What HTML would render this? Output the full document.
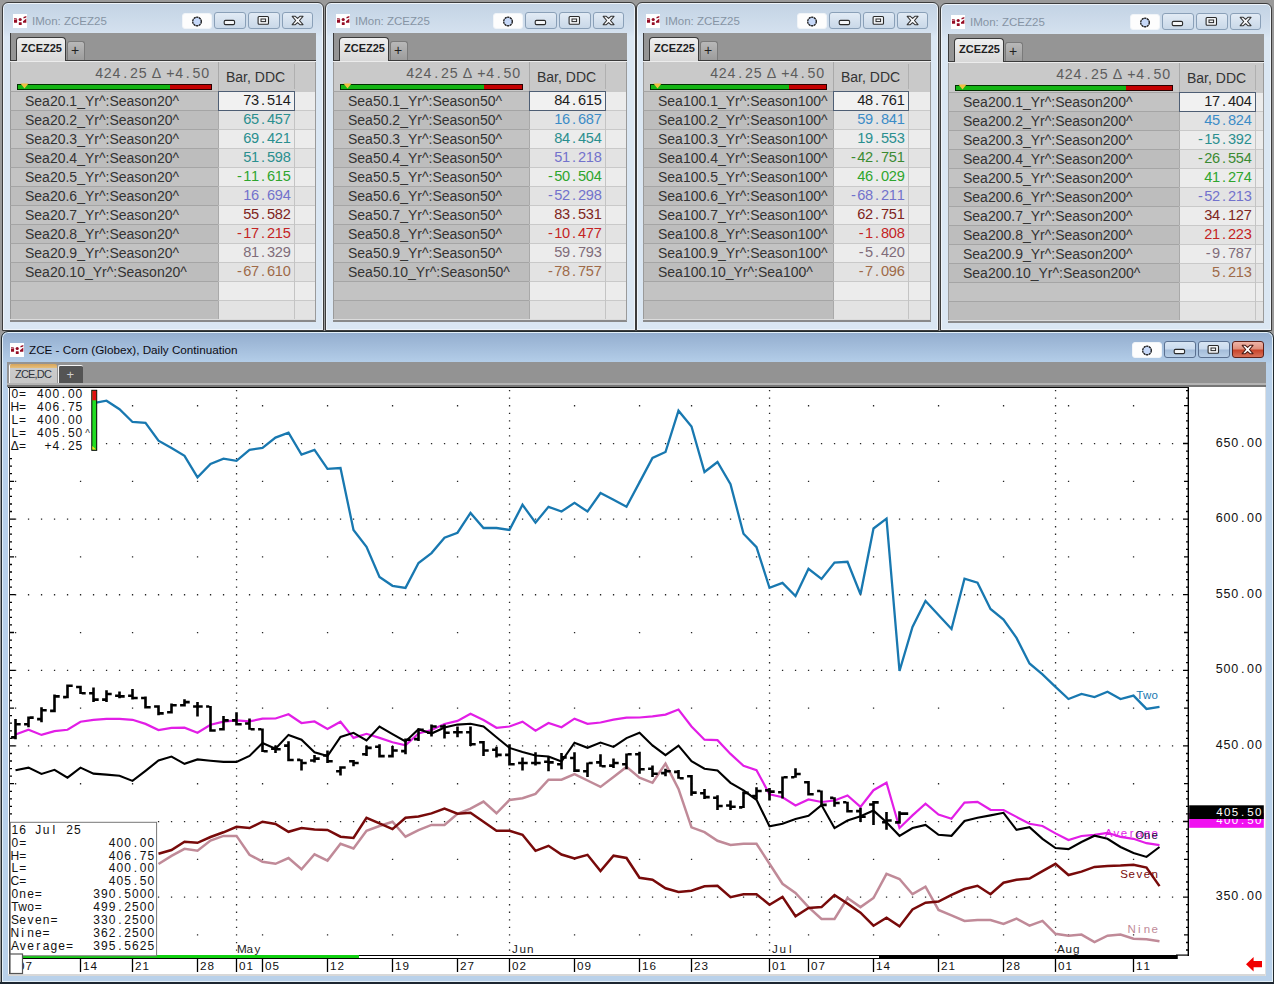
<!DOCTYPE html><html><head><meta charset="utf-8"><style>
*{margin:0;padding:0;box-sizing:border-box}
html,body{width:1274px;height:984px;overflow:hidden;background:#9a9a9a;font-family:"Liberation Sans",sans-serif;position:relative}
.abs{position:absolute}
.win{position:absolute;border:1px solid #3c3c3c;border-radius:6px 6px 0 0;background:linear-gradient(#c3d3e4 0px,#d3e0ee 28px,#dbe7f3 34px,#dbe7f3 100%);box-shadow:inset 0 0 0 1px #eef4fa}
.ttl{position:absolute;font-size:11.5px;line-height:14px;color:#8694a4;white-space:nowrap;letter-spacing:0}
.ico{position:absolute;width:15px;height:15px;background:#fff}
.ico i{position:absolute;background:#a5132d}
.btn{position:absolute;height:17px;border:1px solid #8aa0b8;border-radius:3px;background:linear-gradient(#e2ebf5,#c9d8e8)}
.btn.pin{background:#fdfdfd;border-color:#f0f4f8}
.tabs{position:absolute;background:#959595;border-left:1px solid #3a3a3a}
.tab{position:absolute;border:1px solid #3a3a3a;border-bottom:none;border-radius:4px 4px 0 0;background:linear-gradient(#f0f0f0,#d8d8d8);font-weight:bold;font-size:11px;line-height:12px;color:#1e1e1e}
.ptab{position:absolute;border:1px solid #7a7a7a;border-bottom:none;border-radius:3px 3px 0 0;background:linear-gradient(#b8b8b8,#9c9c9c);font-size:14px;color:#222;text-align:center}
.grid{position:absolute;background:#c3c3c3}
.row{position:absolute;left:0;height:19px;border-top:1px solid #a9a9a9}
.nm{position:absolute;font-size:14px;line-height:16px;color:#333;white-space:nowrap}
.val{position:absolute;font-size:14px;line-height:16px;text-align:right;white-space:nowrap;letter-spacing:1px}
</style></head><body>
<div class="win" style="left:2px;top:2px;width:322px;height:329px"></div><svg class="abs" style="left:13px;top:14px" width="15" height="15"><rect x="0" y="0" width="14" height="14" fill="#fff"/><g fill="#960c24"><path d="M1 4.2H3.3L4.1 5V8.7H1Z"/><path d="M1 4.9H3.6V5.5H1Z" fill="#fff"/><circle cx="7.2" cy="5.5" r="1.6"/><rect x="5.8" y="8.2" width="2.9" height="2.8" rx="0.6"/><path d="M10.5 3L13.3 2.1V3.6L10.5 4.6Z"/><path d="M10 7.3L13.3 4.6V8.7H10Z"/></g></svg><div class="ttl" style="left:32px;top:14px">IMon: ZCEZ25</div><div class="btn pin" style="left:182px;top:13px;width:30px;height:16px"><svg class="abs" style="left:-1px;top:-1px" width="30" height="17"><circle cx="15" cy="8.5" r="4.3" fill="#c6d8f8" stroke="#111" stroke-width="1.3" stroke-dasharray="2.2 0.5"/></svg></div><div class="btn" style="left:214px;top:12px;width:31.5px;height:17.2px"><svg class="abs" style="left:-1px;top:-1px" width="32" height="18"><rect x="10.2" y="8.4" width="10.4" height="4.2" rx="1.3" fill="#f4f6f8" stroke="#2a2a2a" stroke-width="1.1"/></svg></div><div class="btn" style="left:248.4px;top:12px;width:31.2px;height:17.2px"><svg class="abs" style="left:-1px;top:-1px" width="32" height="18"><rect x="10.1" y="4.5" width="10.4" height="7.8" rx="1" fill="#f4f6f8" stroke="#2a2a2a" stroke-width="1.1"/><rect x="13" y="7" width="4.6" height="2.6" fill="none" stroke="#2a2a2a" stroke-width="1"/></svg></div><div class="btn" style="left:282px;top:12px;width:31.3px;height:17.2px"><svg class="abs" style="left:-1px;top:-1px" width="32" height="18"><path d="M10.2 4.3 L13.3 4.3 L15.6 6.4 L17.9 4.3 L21 4.3 L17.5 8.5 L21 12.7 L17.9 12.7 L15.6 10.6 L13.3 12.7 L10.2 12.7 L13.7 8.5 Z" fill="#f8f9fb" stroke="#333" stroke-width="1.1" stroke-linejoin="round"/></svg></div><div class="tabs" style="left:10px;top:33px;width:306px;height:28px"></div><div class="abs" style="left:10px;top:60px;width:306px;height:1px;background:#3a3a3a"></div><div class="abs" style="left:10px;top:61px;width:306px;height:1px;background:#ececec"></div><div class="tab" style="left:16px;top:37px;width:50px;height:24px"><span class="abs" style="left:4px;top:4px">ZCEZ25</span></div><div class="ptab" style="left:67px;top:41px;width:18px;height:19px"><span class="abs" style="left:3px;top:0px">+</span></div><div class="abs" style="left:10px;top:62px;width:306px;height:29px;background:#c9c9c9;border-left:1px solid #9a9a9a"></div><div class="abs" style="left:218px;top:62px;width:1px;height:29px;background:#a9a9a9"></div><div class="abs" style="left:294px;top:64px;width:1px;height:25px;background:#b0b0b0"></div><div class="abs" style="left:226px;top:69px;font-size:14px;line-height:16px;color:#333;white-space:nowrap">Bar, DDC</div><div class="abs" style="left:17px;top:84px;width:195px;height:6px;background:#c40000;border:1px solid #2a0000"></div><div class="abs" style="left:17px;top:84px;width:153px;height:6px;background:#14b514;border:1px solid #003000;border-right:none"></div><svg class="abs" style="left:20px;top:83px" width="9" height="6"><path d="M0.5 0.5 L8.5 0.5 L4.5 5.5Z" fill="#f0c040"/></svg><div class="abs" style="left:10px;top:91px;width:208px;height:19px;background:#c3c3c3;border-top:1px solid #a5a5a5;border-left:1px solid #9a9a9a"></div><div class="abs" style="left:218px;top:91px;width:98px;height:19px;background:#ececec;border-top:1px solid #c9c9c9;border-left:1px solid #a9a9a9"></div><div class="abs" style="left:294px;top:91px;width:1px;height:19px;background:#c4c4c4"></div><div class="nm" style="left:25px;top:93px">Sea20.1_Yr^:Season20^</div><div class="abs" style="left:10px;top:110px;width:208px;height:19px;background:#bdbdbd;border-top:1px solid #a5a5a5;border-left:1px solid #9a9a9a"></div><div class="abs" style="left:218px;top:110px;width:98px;height:19px;background:#e3e3e3;border-top:1px solid #c9c9c9;border-left:1px solid #a9a9a9"></div><div class="abs" style="left:294px;top:110px;width:1px;height:19px;background:#c4c4c4"></div><div class="nm" style="left:25px;top:112px">Sea20.2_Yr^:Season20^</div><div class="abs" style="left:10px;top:129px;width:208px;height:19px;background:#c3c3c3;border-top:1px solid #a5a5a5;border-left:1px solid #9a9a9a"></div><div class="abs" style="left:218px;top:129px;width:98px;height:19px;background:#ececec;border-top:1px solid #c9c9c9;border-left:1px solid #a9a9a9"></div><div class="abs" style="left:294px;top:129px;width:1px;height:19px;background:#c4c4c4"></div><div class="nm" style="left:25px;top:131px">Sea20.3_Yr^:Season20^</div><div class="abs" style="left:10px;top:148px;width:208px;height:19px;background:#bdbdbd;border-top:1px solid #a5a5a5;border-left:1px solid #9a9a9a"></div><div class="abs" style="left:218px;top:148px;width:98px;height:19px;background:#e3e3e3;border-top:1px solid #c9c9c9;border-left:1px solid #a9a9a9"></div><div class="abs" style="left:294px;top:148px;width:1px;height:19px;background:#c4c4c4"></div><div class="nm" style="left:25px;top:150px">Sea20.4_Yr^:Season20^</div><div class="abs" style="left:10px;top:167px;width:208px;height:19px;background:#c3c3c3;border-top:1px solid #a5a5a5;border-left:1px solid #9a9a9a"></div><div class="abs" style="left:218px;top:167px;width:98px;height:19px;background:#ececec;border-top:1px solid #c9c9c9;border-left:1px solid #a9a9a9"></div><div class="abs" style="left:294px;top:167px;width:1px;height:19px;background:#c4c4c4"></div><div class="nm" style="left:25px;top:169px">Sea20.5_Yr^:Season20^</div><div class="abs" style="left:10px;top:186px;width:208px;height:19px;background:#bdbdbd;border-top:1px solid #a5a5a5;border-left:1px solid #9a9a9a"></div><div class="abs" style="left:218px;top:186px;width:98px;height:19px;background:#e3e3e3;border-top:1px solid #c9c9c9;border-left:1px solid #a9a9a9"></div><div class="abs" style="left:294px;top:186px;width:1px;height:19px;background:#c4c4c4"></div><div class="nm" style="left:25px;top:188px">Sea20.6_Yr^:Season20^</div><div class="abs" style="left:10px;top:205px;width:208px;height:19px;background:#c3c3c3;border-top:1px solid #a5a5a5;border-left:1px solid #9a9a9a"></div><div class="abs" style="left:218px;top:205px;width:98px;height:19px;background:#ececec;border-top:1px solid #c9c9c9;border-left:1px solid #a9a9a9"></div><div class="abs" style="left:294px;top:205px;width:1px;height:19px;background:#c4c4c4"></div><div class="nm" style="left:25px;top:207px">Sea20.7_Yr^:Season20^</div><div class="abs" style="left:10px;top:224px;width:208px;height:19px;background:#bdbdbd;border-top:1px solid #a5a5a5;border-left:1px solid #9a9a9a"></div><div class="abs" style="left:218px;top:224px;width:98px;height:19px;background:#e3e3e3;border-top:1px solid #c9c9c9;border-left:1px solid #a9a9a9"></div><div class="abs" style="left:294px;top:224px;width:1px;height:19px;background:#c4c4c4"></div><div class="nm" style="left:25px;top:226px">Sea20.8_Yr^:Season20^</div><div class="abs" style="left:10px;top:243px;width:208px;height:19px;background:#c3c3c3;border-top:1px solid #a5a5a5;border-left:1px solid #9a9a9a"></div><div class="abs" style="left:218px;top:243px;width:98px;height:19px;background:#ececec;border-top:1px solid #c9c9c9;border-left:1px solid #a9a9a9"></div><div class="abs" style="left:294px;top:243px;width:1px;height:19px;background:#c4c4c4"></div><div class="nm" style="left:25px;top:245px">Sea20.9_Yr^:Season20^</div><div class="abs" style="left:10px;top:262px;width:208px;height:19px;background:#bdbdbd;border-top:1px solid #a5a5a5;border-left:1px solid #9a9a9a"></div><div class="abs" style="left:218px;top:262px;width:98px;height:19px;background:#e3e3e3;border-top:1px solid #c9c9c9;border-left:1px solid #a9a9a9"></div><div class="abs" style="left:294px;top:262px;width:1px;height:19px;background:#c4c4c4"></div><div class="nm" style="left:25px;top:264px">Sea20.10_Yr^:Season20^</div><div class="abs" style="left:10px;top:281px;width:208px;height:19px;background:#c3c3c3;border-top:1px solid #a5a5a5;border-left:1px solid #9a9a9a"></div><div class="abs" style="left:218px;top:281px;width:98px;height:19px;background:#ececec;border-top:1px solid #c9c9c9;border-left:1px solid #a9a9a9"></div><div class="abs" style="left:294px;top:281px;width:1px;height:19px;background:#c4c4c4"></div><div class="abs" style="left:10px;top:300px;width:208px;height:19px;background:#bdbdbd;border-top:1px solid #a5a5a5;border-left:1px solid #9a9a9a"></div><div class="abs" style="left:218px;top:300px;width:98px;height:19px;background:#e3e3e3;border-top:1px solid #c9c9c9;border-left:1px solid #a9a9a9"></div><div class="abs" style="left:294px;top:300px;width:1px;height:19px;background:#c4c4c4"></div><div class="abs" style="left:218px;top:91px;width:77px;height:20px;border:1px solid #4e5e74;background:rgba(255,255,255,0.25)"></div><div class="abs" style="left:10px;top:319px;width:306px;height:1px;background:#dcdcdc"></div><div class="abs" style="left:10px;top:320px;width:306px;height:1.5px;background:#8a8a8a"></div><div class="abs" style="left:315px;top:62px;width:1px;height:259px;background:#9a9a9a"></div>
<div class="win" style="left:325px;top:2px;width:311px;height:329px"></div><svg class="abs" style="left:336px;top:14px" width="15" height="15"><rect x="0" y="0" width="14" height="14" fill="#fff"/><g fill="#960c24"><path d="M1 4.2H3.3L4.1 5V8.7H1Z"/><path d="M1 4.9H3.6V5.5H1Z" fill="#fff"/><circle cx="7.2" cy="5.5" r="1.6"/><rect x="5.8" y="8.2" width="2.9" height="2.8" rx="0.6"/><path d="M10.5 3L13.3 2.1V3.6L10.5 4.6Z"/><path d="M10 7.3L13.3 4.6V8.7H10Z"/></g></svg><div class="ttl" style="left:355px;top:14px">IMon: ZCEZ25</div><div class="btn pin" style="left:493px;top:13px;width:30px;height:16px"><svg class="abs" style="left:-1px;top:-1px" width="30" height="17"><circle cx="15" cy="8.5" r="4.3" fill="#c6d8f8" stroke="#111" stroke-width="1.3" stroke-dasharray="2.2 0.5"/></svg></div><div class="btn" style="left:525px;top:12px;width:31.5px;height:17.2px"><svg class="abs" style="left:-1px;top:-1px" width="32" height="18"><rect x="10.2" y="8.4" width="10.4" height="4.2" rx="1.3" fill="#f4f6f8" stroke="#2a2a2a" stroke-width="1.1"/></svg></div><div class="btn" style="left:559.4px;top:12px;width:31.2px;height:17.2px"><svg class="abs" style="left:-1px;top:-1px" width="32" height="18"><rect x="10.1" y="4.5" width="10.4" height="7.8" rx="1" fill="#f4f6f8" stroke="#2a2a2a" stroke-width="1.1"/><rect x="13" y="7" width="4.6" height="2.6" fill="none" stroke="#2a2a2a" stroke-width="1"/></svg></div><div class="btn" style="left:593px;top:12px;width:31.3px;height:17.2px"><svg class="abs" style="left:-1px;top:-1px" width="32" height="18"><path d="M10.2 4.3 L13.3 4.3 L15.6 6.4 L17.9 4.3 L21 4.3 L17.5 8.5 L21 12.7 L17.9 12.7 L15.6 10.6 L13.3 12.7 L10.2 12.7 L13.7 8.5 Z" fill="#f8f9fb" stroke="#333" stroke-width="1.1" stroke-linejoin="round"/></svg></div><div class="tabs" style="left:333px;top:33px;width:294px;height:28px"></div><div class="abs" style="left:333px;top:60px;width:294px;height:1px;background:#3a3a3a"></div><div class="abs" style="left:333px;top:61px;width:294px;height:1px;background:#ececec"></div><div class="tab" style="left:339px;top:37px;width:50px;height:24px"><span class="abs" style="left:4px;top:4px">ZCEZ25</span></div><div class="ptab" style="left:390px;top:41px;width:18px;height:19px"><span class="abs" style="left:3px;top:0px">+</span></div><div class="abs" style="left:333px;top:62px;width:294px;height:29px;background:#c9c9c9;border-left:1px solid #9a9a9a"></div><div class="abs" style="left:529px;top:62px;width:1px;height:29px;background:#a9a9a9"></div><div class="abs" style="left:605px;top:64px;width:1px;height:25px;background:#b0b0b0"></div><div class="abs" style="left:537px;top:69px;font-size:14px;line-height:16px;color:#333;white-space:nowrap">Bar, DDC</div><div class="abs" style="left:340px;top:84px;width:183px;height:6px;background:#c40000;border:1px solid #2a0000"></div><div class="abs" style="left:340px;top:84px;width:144px;height:6px;background:#14b514;border:1px solid #003000;border-right:none"></div><svg class="abs" style="left:343px;top:83px" width="9" height="6"><path d="M0.5 0.5 L8.5 0.5 L4.5 5.5Z" fill="#f0c040"/></svg><div class="abs" style="left:333px;top:91px;width:196px;height:19px;background:#c3c3c3;border-top:1px solid #a5a5a5;border-left:1px solid #9a9a9a"></div><div class="abs" style="left:529px;top:91px;width:98px;height:19px;background:#ececec;border-top:1px solid #c9c9c9;border-left:1px solid #a9a9a9"></div><div class="abs" style="left:605px;top:91px;width:1px;height:19px;background:#c4c4c4"></div><div class="nm" style="left:348px;top:93px">Sea50.1_Yr^:Season50^</div><div class="abs" style="left:333px;top:110px;width:196px;height:19px;background:#bdbdbd;border-top:1px solid #a5a5a5;border-left:1px solid #9a9a9a"></div><div class="abs" style="left:529px;top:110px;width:98px;height:19px;background:#e3e3e3;border-top:1px solid #c9c9c9;border-left:1px solid #a9a9a9"></div><div class="abs" style="left:605px;top:110px;width:1px;height:19px;background:#c4c4c4"></div><div class="nm" style="left:348px;top:112px">Sea50.2_Yr^:Season50^</div><div class="abs" style="left:333px;top:129px;width:196px;height:19px;background:#c3c3c3;border-top:1px solid #a5a5a5;border-left:1px solid #9a9a9a"></div><div class="abs" style="left:529px;top:129px;width:98px;height:19px;background:#ececec;border-top:1px solid #c9c9c9;border-left:1px solid #a9a9a9"></div><div class="abs" style="left:605px;top:129px;width:1px;height:19px;background:#c4c4c4"></div><div class="nm" style="left:348px;top:131px">Sea50.3_Yr^:Season50^</div><div class="abs" style="left:333px;top:148px;width:196px;height:19px;background:#bdbdbd;border-top:1px solid #a5a5a5;border-left:1px solid #9a9a9a"></div><div class="abs" style="left:529px;top:148px;width:98px;height:19px;background:#e3e3e3;border-top:1px solid #c9c9c9;border-left:1px solid #a9a9a9"></div><div class="abs" style="left:605px;top:148px;width:1px;height:19px;background:#c4c4c4"></div><div class="nm" style="left:348px;top:150px">Sea50.4_Yr^:Season50^</div><div class="abs" style="left:333px;top:167px;width:196px;height:19px;background:#c3c3c3;border-top:1px solid #a5a5a5;border-left:1px solid #9a9a9a"></div><div class="abs" style="left:529px;top:167px;width:98px;height:19px;background:#ececec;border-top:1px solid #c9c9c9;border-left:1px solid #a9a9a9"></div><div class="abs" style="left:605px;top:167px;width:1px;height:19px;background:#c4c4c4"></div><div class="nm" style="left:348px;top:169px">Sea50.5_Yr^:Season50^</div><div class="abs" style="left:333px;top:186px;width:196px;height:19px;background:#bdbdbd;border-top:1px solid #a5a5a5;border-left:1px solid #9a9a9a"></div><div class="abs" style="left:529px;top:186px;width:98px;height:19px;background:#e3e3e3;border-top:1px solid #c9c9c9;border-left:1px solid #a9a9a9"></div><div class="abs" style="left:605px;top:186px;width:1px;height:19px;background:#c4c4c4"></div><div class="nm" style="left:348px;top:188px">Sea50.6_Yr^:Season50^</div><div class="abs" style="left:333px;top:205px;width:196px;height:19px;background:#c3c3c3;border-top:1px solid #a5a5a5;border-left:1px solid #9a9a9a"></div><div class="abs" style="left:529px;top:205px;width:98px;height:19px;background:#ececec;border-top:1px solid #c9c9c9;border-left:1px solid #a9a9a9"></div><div class="abs" style="left:605px;top:205px;width:1px;height:19px;background:#c4c4c4"></div><div class="nm" style="left:348px;top:207px">Sea50.7_Yr^:Season50^</div><div class="abs" style="left:333px;top:224px;width:196px;height:19px;background:#bdbdbd;border-top:1px solid #a5a5a5;border-left:1px solid #9a9a9a"></div><div class="abs" style="left:529px;top:224px;width:98px;height:19px;background:#e3e3e3;border-top:1px solid #c9c9c9;border-left:1px solid #a9a9a9"></div><div class="abs" style="left:605px;top:224px;width:1px;height:19px;background:#c4c4c4"></div><div class="nm" style="left:348px;top:226px">Sea50.8_Yr^:Season50^</div><div class="abs" style="left:333px;top:243px;width:196px;height:19px;background:#c3c3c3;border-top:1px solid #a5a5a5;border-left:1px solid #9a9a9a"></div><div class="abs" style="left:529px;top:243px;width:98px;height:19px;background:#ececec;border-top:1px solid #c9c9c9;border-left:1px solid #a9a9a9"></div><div class="abs" style="left:605px;top:243px;width:1px;height:19px;background:#c4c4c4"></div><div class="nm" style="left:348px;top:245px">Sea50.9_Yr^:Season50^</div><div class="abs" style="left:333px;top:262px;width:196px;height:19px;background:#bdbdbd;border-top:1px solid #a5a5a5;border-left:1px solid #9a9a9a"></div><div class="abs" style="left:529px;top:262px;width:98px;height:19px;background:#e3e3e3;border-top:1px solid #c9c9c9;border-left:1px solid #a9a9a9"></div><div class="abs" style="left:605px;top:262px;width:1px;height:19px;background:#c4c4c4"></div><div class="nm" style="left:348px;top:264px">Sea50.10_Yr^:Season50^</div><div class="abs" style="left:333px;top:281px;width:196px;height:19px;background:#c3c3c3;border-top:1px solid #a5a5a5;border-left:1px solid #9a9a9a"></div><div class="abs" style="left:529px;top:281px;width:98px;height:19px;background:#ececec;border-top:1px solid #c9c9c9;border-left:1px solid #a9a9a9"></div><div class="abs" style="left:605px;top:281px;width:1px;height:19px;background:#c4c4c4"></div><div class="abs" style="left:333px;top:300px;width:196px;height:19px;background:#bdbdbd;border-top:1px solid #a5a5a5;border-left:1px solid #9a9a9a"></div><div class="abs" style="left:529px;top:300px;width:98px;height:19px;background:#e3e3e3;border-top:1px solid #c9c9c9;border-left:1px solid #a9a9a9"></div><div class="abs" style="left:605px;top:300px;width:1px;height:19px;background:#c4c4c4"></div><div class="abs" style="left:529px;top:91px;width:77px;height:20px;border:1px solid #4e5e74;background:rgba(255,255,255,0.25)"></div><div class="abs" style="left:333px;top:319px;width:294px;height:1px;background:#dcdcdc"></div><div class="abs" style="left:333px;top:320px;width:294px;height:1.5px;background:#8a8a8a"></div><div class="abs" style="left:626px;top:62px;width:1px;height:259px;background:#9a9a9a"></div>
<div class="win" style="left:636px;top:2px;width:303px;height:329px"></div><svg class="abs" style="left:646px;top:14px" width="15" height="15"><rect x="0" y="0" width="14" height="14" fill="#fff"/><g fill="#960c24"><path d="M1 4.2H3.3L4.1 5V8.7H1Z"/><path d="M1 4.9H3.6V5.5H1Z" fill="#fff"/><circle cx="7.2" cy="5.5" r="1.6"/><rect x="5.8" y="8.2" width="2.9" height="2.8" rx="0.6"/><path d="M10.5 3L13.3 2.1V3.6L10.5 4.6Z"/><path d="M10 7.3L13.3 4.6V8.7H10Z"/></g></svg><div class="ttl" style="left:665px;top:14px">IMon: ZCEZ25</div><div class="btn pin" style="left:797px;top:13px;width:30px;height:16px"><svg class="abs" style="left:-1px;top:-1px" width="30" height="17"><circle cx="15" cy="8.5" r="4.3" fill="#c6d8f8" stroke="#111" stroke-width="1.3" stroke-dasharray="2.2 0.5"/></svg></div><div class="btn" style="left:829px;top:12px;width:31.5px;height:17.2px"><svg class="abs" style="left:-1px;top:-1px" width="32" height="18"><rect x="10.2" y="8.4" width="10.4" height="4.2" rx="1.3" fill="#f4f6f8" stroke="#2a2a2a" stroke-width="1.1"/></svg></div><div class="btn" style="left:863.4px;top:12px;width:31.2px;height:17.2px"><svg class="abs" style="left:-1px;top:-1px" width="32" height="18"><rect x="10.1" y="4.5" width="10.4" height="7.8" rx="1" fill="#f4f6f8" stroke="#2a2a2a" stroke-width="1.1"/><rect x="13" y="7" width="4.6" height="2.6" fill="none" stroke="#2a2a2a" stroke-width="1"/></svg></div><div class="btn" style="left:897px;top:12px;width:31.3px;height:17.2px"><svg class="abs" style="left:-1px;top:-1px" width="32" height="18"><path d="M10.2 4.3 L13.3 4.3 L15.6 6.4 L17.9 4.3 L21 4.3 L17.5 8.5 L21 12.7 L17.9 12.7 L15.6 10.6 L13.3 12.7 L10.2 12.7 L13.7 8.5 Z" fill="#f8f9fb" stroke="#333" stroke-width="1.1" stroke-linejoin="round"/></svg></div><div class="tabs" style="left:643px;top:33px;width:288px;height:28px"></div><div class="abs" style="left:643px;top:60px;width:288px;height:1px;background:#3a3a3a"></div><div class="abs" style="left:643px;top:61px;width:288px;height:1px;background:#ececec"></div><div class="tab" style="left:649px;top:37px;width:50px;height:24px"><span class="abs" style="left:4px;top:4px">ZCEZ25</span></div><div class="ptab" style="left:700px;top:41px;width:18px;height:19px"><span class="abs" style="left:3px;top:0px">+</span></div><div class="abs" style="left:643px;top:62px;width:288px;height:29px;background:#c9c9c9;border-left:1px solid #9a9a9a"></div><div class="abs" style="left:833px;top:62px;width:1px;height:29px;background:#a9a9a9"></div><div class="abs" style="left:908px;top:64px;width:1px;height:25px;background:#b0b0b0"></div><div class="abs" style="left:841px;top:69px;font-size:14px;line-height:16px;color:#333;white-space:nowrap">Bar, DDC</div><div class="abs" style="left:650px;top:84px;width:177px;height:6px;background:#c40000;border:1px solid #2a0000"></div><div class="abs" style="left:650px;top:84px;width:139px;height:6px;background:#14b514;border:1px solid #003000;border-right:none"></div><svg class="abs" style="left:653px;top:83px" width="9" height="6"><path d="M0.5 0.5 L8.5 0.5 L4.5 5.5Z" fill="#f0c040"/></svg><div class="abs" style="left:643px;top:91px;width:190px;height:19px;background:#c3c3c3;border-top:1px solid #a5a5a5;border-left:1px solid #9a9a9a"></div><div class="abs" style="left:833px;top:91px;width:98px;height:19px;background:#ececec;border-top:1px solid #c9c9c9;border-left:1px solid #a9a9a9"></div><div class="abs" style="left:908px;top:91px;width:1px;height:19px;background:#c4c4c4"></div><div class="nm" style="left:658px;top:93px">Sea100.1_Yr^:Season100^</div><div class="abs" style="left:643px;top:110px;width:190px;height:19px;background:#bdbdbd;border-top:1px solid #a5a5a5;border-left:1px solid #9a9a9a"></div><div class="abs" style="left:833px;top:110px;width:98px;height:19px;background:#e3e3e3;border-top:1px solid #c9c9c9;border-left:1px solid #a9a9a9"></div><div class="abs" style="left:908px;top:110px;width:1px;height:19px;background:#c4c4c4"></div><div class="nm" style="left:658px;top:112px">Sea100.2_Yr^:Season100^</div><div class="abs" style="left:643px;top:129px;width:190px;height:19px;background:#c3c3c3;border-top:1px solid #a5a5a5;border-left:1px solid #9a9a9a"></div><div class="abs" style="left:833px;top:129px;width:98px;height:19px;background:#ececec;border-top:1px solid #c9c9c9;border-left:1px solid #a9a9a9"></div><div class="abs" style="left:908px;top:129px;width:1px;height:19px;background:#c4c4c4"></div><div class="nm" style="left:658px;top:131px">Sea100.3_Yr^:Season100^</div><div class="abs" style="left:643px;top:148px;width:190px;height:19px;background:#bdbdbd;border-top:1px solid #a5a5a5;border-left:1px solid #9a9a9a"></div><div class="abs" style="left:833px;top:148px;width:98px;height:19px;background:#e3e3e3;border-top:1px solid #c9c9c9;border-left:1px solid #a9a9a9"></div><div class="abs" style="left:908px;top:148px;width:1px;height:19px;background:#c4c4c4"></div><div class="nm" style="left:658px;top:150px">Sea100.4_Yr^:Season100^</div><div class="abs" style="left:643px;top:167px;width:190px;height:19px;background:#c3c3c3;border-top:1px solid #a5a5a5;border-left:1px solid #9a9a9a"></div><div class="abs" style="left:833px;top:167px;width:98px;height:19px;background:#ececec;border-top:1px solid #c9c9c9;border-left:1px solid #a9a9a9"></div><div class="abs" style="left:908px;top:167px;width:1px;height:19px;background:#c4c4c4"></div><div class="nm" style="left:658px;top:169px">Sea100.5_Yr^:Season100^</div><div class="abs" style="left:643px;top:186px;width:190px;height:19px;background:#bdbdbd;border-top:1px solid #a5a5a5;border-left:1px solid #9a9a9a"></div><div class="abs" style="left:833px;top:186px;width:98px;height:19px;background:#e3e3e3;border-top:1px solid #c9c9c9;border-left:1px solid #a9a9a9"></div><div class="abs" style="left:908px;top:186px;width:1px;height:19px;background:#c4c4c4"></div><div class="nm" style="left:658px;top:188px">Sea100.6_Yr^:Season100^</div><div class="abs" style="left:643px;top:205px;width:190px;height:19px;background:#c3c3c3;border-top:1px solid #a5a5a5;border-left:1px solid #9a9a9a"></div><div class="abs" style="left:833px;top:205px;width:98px;height:19px;background:#ececec;border-top:1px solid #c9c9c9;border-left:1px solid #a9a9a9"></div><div class="abs" style="left:908px;top:205px;width:1px;height:19px;background:#c4c4c4"></div><div class="nm" style="left:658px;top:207px">Sea100.7_Yr^:Season100^</div><div class="abs" style="left:643px;top:224px;width:190px;height:19px;background:#bdbdbd;border-top:1px solid #a5a5a5;border-left:1px solid #9a9a9a"></div><div class="abs" style="left:833px;top:224px;width:98px;height:19px;background:#e3e3e3;border-top:1px solid #c9c9c9;border-left:1px solid #a9a9a9"></div><div class="abs" style="left:908px;top:224px;width:1px;height:19px;background:#c4c4c4"></div><div class="nm" style="left:658px;top:226px">Sea100.8_Yr^:Season100^</div><div class="abs" style="left:643px;top:243px;width:190px;height:19px;background:#c3c3c3;border-top:1px solid #a5a5a5;border-left:1px solid #9a9a9a"></div><div class="abs" style="left:833px;top:243px;width:98px;height:19px;background:#ececec;border-top:1px solid #c9c9c9;border-left:1px solid #a9a9a9"></div><div class="abs" style="left:908px;top:243px;width:1px;height:19px;background:#c4c4c4"></div><div class="nm" style="left:658px;top:245px">Sea100.9_Yr^:Season100^</div><div class="abs" style="left:643px;top:262px;width:190px;height:19px;background:#bdbdbd;border-top:1px solid #a5a5a5;border-left:1px solid #9a9a9a"></div><div class="abs" style="left:833px;top:262px;width:98px;height:19px;background:#e3e3e3;border-top:1px solid #c9c9c9;border-left:1px solid #a9a9a9"></div><div class="abs" style="left:908px;top:262px;width:1px;height:19px;background:#c4c4c4"></div><div class="nm" style="left:658px;top:264px">Sea100.10_Yr^:Sea100^</div><div class="abs" style="left:643px;top:281px;width:190px;height:19px;background:#c3c3c3;border-top:1px solid #a5a5a5;border-left:1px solid #9a9a9a"></div><div class="abs" style="left:833px;top:281px;width:98px;height:19px;background:#ececec;border-top:1px solid #c9c9c9;border-left:1px solid #a9a9a9"></div><div class="abs" style="left:908px;top:281px;width:1px;height:19px;background:#c4c4c4"></div><div class="abs" style="left:643px;top:300px;width:190px;height:19px;background:#bdbdbd;border-top:1px solid #a5a5a5;border-left:1px solid #9a9a9a"></div><div class="abs" style="left:833px;top:300px;width:98px;height:19px;background:#e3e3e3;border-top:1px solid #c9c9c9;border-left:1px solid #a9a9a9"></div><div class="abs" style="left:908px;top:300px;width:1px;height:19px;background:#c4c4c4"></div><div class="abs" style="left:833px;top:91px;width:76px;height:20px;border:1px solid #4e5e74;background:rgba(255,255,255,0.25)"></div><div class="abs" style="left:643px;top:319px;width:288px;height:1px;background:#dcdcdc"></div><div class="abs" style="left:643px;top:320px;width:288px;height:1.5px;background:#8a8a8a"></div><div class="abs" style="left:930px;top:62px;width:1px;height:259px;background:#9a9a9a"></div>
<div class="win" style="left:940px;top:3px;width:332px;height:328px"></div><svg class="abs" style="left:951px;top:15px" width="15" height="15"><rect x="0" y="0" width="14" height="14" fill="#fff"/><g fill="#960c24"><path d="M1 4.2H3.3L4.1 5V8.7H1Z"/><path d="M1 4.9H3.6V5.5H1Z" fill="#fff"/><circle cx="7.2" cy="5.5" r="1.6"/><rect x="5.8" y="8.2" width="2.9" height="2.8" rx="0.6"/><path d="M10.5 3L13.3 2.1V3.6L10.5 4.6Z"/><path d="M10 7.3L13.3 4.6V8.7H10Z"/></g></svg><div class="ttl" style="left:970px;top:15px">IMon: ZCEZ25</div><div class="btn pin" style="left:1130px;top:14px;width:30px;height:16px"><svg class="abs" style="left:-1px;top:-1px" width="30" height="17"><circle cx="15" cy="8.5" r="4.3" fill="#c6d8f8" stroke="#111" stroke-width="1.3" stroke-dasharray="2.2 0.5"/></svg></div><div class="btn" style="left:1162px;top:13px;width:31.5px;height:17.2px"><svg class="abs" style="left:-1px;top:-1px" width="32" height="18"><rect x="10.2" y="8.4" width="10.4" height="4.2" rx="1.3" fill="#f4f6f8" stroke="#2a2a2a" stroke-width="1.1"/></svg></div><div class="btn" style="left:1196.4px;top:13px;width:31.2px;height:17.2px"><svg class="abs" style="left:-1px;top:-1px" width="32" height="18"><rect x="10.1" y="4.5" width="10.4" height="7.8" rx="1" fill="#f4f6f8" stroke="#2a2a2a" stroke-width="1.1"/><rect x="13" y="7" width="4.6" height="2.6" fill="none" stroke="#2a2a2a" stroke-width="1"/></svg></div><div class="btn" style="left:1230px;top:13px;width:31.3px;height:17.2px"><svg class="abs" style="left:-1px;top:-1px" width="32" height="18"><path d="M10.2 4.3 L13.3 4.3 L15.6 6.4 L17.9 4.3 L21 4.3 L17.5 8.5 L21 12.7 L17.9 12.7 L15.6 10.6 L13.3 12.7 L10.2 12.7 L13.7 8.5 Z" fill="#f8f9fb" stroke="#333" stroke-width="1.1" stroke-linejoin="round"/></svg></div><div class="tabs" style="left:948px;top:34px;width:316px;height:28px"></div><div class="abs" style="left:948px;top:61px;width:316px;height:1px;background:#3a3a3a"></div><div class="abs" style="left:948px;top:62px;width:316px;height:1px;background:#ececec"></div><div class="tab" style="left:954px;top:38px;width:50px;height:24px"><span class="abs" style="left:4px;top:4px">ZCEZ25</span></div><div class="ptab" style="left:1005px;top:42px;width:18px;height:19px"><span class="abs" style="left:3px;top:0px">+</span></div><div class="abs" style="left:948px;top:63px;width:316px;height:29px;background:#c9c9c9;border-left:1px solid #9a9a9a"></div><div class="abs" style="left:1179px;top:63px;width:1px;height:29px;background:#a9a9a9"></div><div class="abs" style="left:1255px;top:65px;width:1px;height:25px;background:#b0b0b0"></div><div class="abs" style="left:1187px;top:70px;font-size:14px;line-height:16px;color:#333;white-space:nowrap">Bar, DDC</div><div class="abs" style="left:955px;top:85px;width:218px;height:6px;background:#c40000;border:1px solid #2a0000"></div><div class="abs" style="left:955px;top:85px;width:171px;height:6px;background:#14b514;border:1px solid #003000;border-right:none"></div><svg class="abs" style="left:958px;top:84px" width="9" height="6"><path d="M0.5 0.5 L8.5 0.5 L4.5 5.5Z" fill="#f0c040"/></svg><div class="abs" style="left:948px;top:92px;width:231px;height:19px;background:#c3c3c3;border-top:1px solid #a5a5a5;border-left:1px solid #9a9a9a"></div><div class="abs" style="left:1179px;top:92px;width:85px;height:19px;background:#ececec;border-top:1px solid #c9c9c9;border-left:1px solid #a9a9a9"></div><div class="abs" style="left:1255px;top:92px;width:1px;height:19px;background:#c4c4c4"></div><div class="nm" style="left:963px;top:94px">Sea200.1_Yr^:Season200^</div><div class="abs" style="left:948px;top:111px;width:231px;height:19px;background:#bdbdbd;border-top:1px solid #a5a5a5;border-left:1px solid #9a9a9a"></div><div class="abs" style="left:1179px;top:111px;width:85px;height:19px;background:#e3e3e3;border-top:1px solid #c9c9c9;border-left:1px solid #a9a9a9"></div><div class="abs" style="left:1255px;top:111px;width:1px;height:19px;background:#c4c4c4"></div><div class="nm" style="left:963px;top:113px">Sea200.2_Yr^:Season200^</div><div class="abs" style="left:948px;top:130px;width:231px;height:19px;background:#c3c3c3;border-top:1px solid #a5a5a5;border-left:1px solid #9a9a9a"></div><div class="abs" style="left:1179px;top:130px;width:85px;height:19px;background:#ececec;border-top:1px solid #c9c9c9;border-left:1px solid #a9a9a9"></div><div class="abs" style="left:1255px;top:130px;width:1px;height:19px;background:#c4c4c4"></div><div class="nm" style="left:963px;top:132px">Sea200.3_Yr^:Season200^</div><div class="abs" style="left:948px;top:149px;width:231px;height:19px;background:#bdbdbd;border-top:1px solid #a5a5a5;border-left:1px solid #9a9a9a"></div><div class="abs" style="left:1179px;top:149px;width:85px;height:19px;background:#e3e3e3;border-top:1px solid #c9c9c9;border-left:1px solid #a9a9a9"></div><div class="abs" style="left:1255px;top:149px;width:1px;height:19px;background:#c4c4c4"></div><div class="nm" style="left:963px;top:151px">Sea200.4_Yr^:Season200^</div><div class="abs" style="left:948px;top:168px;width:231px;height:19px;background:#c3c3c3;border-top:1px solid #a5a5a5;border-left:1px solid #9a9a9a"></div><div class="abs" style="left:1179px;top:168px;width:85px;height:19px;background:#ececec;border-top:1px solid #c9c9c9;border-left:1px solid #a9a9a9"></div><div class="abs" style="left:1255px;top:168px;width:1px;height:19px;background:#c4c4c4"></div><div class="nm" style="left:963px;top:170px">Sea200.5_Yr^:Season200^</div><div class="abs" style="left:948px;top:187px;width:231px;height:19px;background:#bdbdbd;border-top:1px solid #a5a5a5;border-left:1px solid #9a9a9a"></div><div class="abs" style="left:1179px;top:187px;width:85px;height:19px;background:#e3e3e3;border-top:1px solid #c9c9c9;border-left:1px solid #a9a9a9"></div><div class="abs" style="left:1255px;top:187px;width:1px;height:19px;background:#c4c4c4"></div><div class="nm" style="left:963px;top:189px">Sea200.6_Yr^:Season200^</div><div class="abs" style="left:948px;top:206px;width:231px;height:19px;background:#c3c3c3;border-top:1px solid #a5a5a5;border-left:1px solid #9a9a9a"></div><div class="abs" style="left:1179px;top:206px;width:85px;height:19px;background:#ececec;border-top:1px solid #c9c9c9;border-left:1px solid #a9a9a9"></div><div class="abs" style="left:1255px;top:206px;width:1px;height:19px;background:#c4c4c4"></div><div class="nm" style="left:963px;top:208px">Sea200.7_Yr^:Season200^</div><div class="abs" style="left:948px;top:225px;width:231px;height:19px;background:#bdbdbd;border-top:1px solid #a5a5a5;border-left:1px solid #9a9a9a"></div><div class="abs" style="left:1179px;top:225px;width:85px;height:19px;background:#e3e3e3;border-top:1px solid #c9c9c9;border-left:1px solid #a9a9a9"></div><div class="abs" style="left:1255px;top:225px;width:1px;height:19px;background:#c4c4c4"></div><div class="nm" style="left:963px;top:227px">Sea200.8_Yr^:Season200^</div><div class="abs" style="left:948px;top:244px;width:231px;height:19px;background:#c3c3c3;border-top:1px solid #a5a5a5;border-left:1px solid #9a9a9a"></div><div class="abs" style="left:1179px;top:244px;width:85px;height:19px;background:#ececec;border-top:1px solid #c9c9c9;border-left:1px solid #a9a9a9"></div><div class="abs" style="left:1255px;top:244px;width:1px;height:19px;background:#c4c4c4"></div><div class="nm" style="left:963px;top:246px">Sea200.9_Yr^:Season200^</div><div class="abs" style="left:948px;top:263px;width:231px;height:19px;background:#bdbdbd;border-top:1px solid #a5a5a5;border-left:1px solid #9a9a9a"></div><div class="abs" style="left:1179px;top:263px;width:85px;height:19px;background:#e3e3e3;border-top:1px solid #c9c9c9;border-left:1px solid #a9a9a9"></div><div class="abs" style="left:1255px;top:263px;width:1px;height:19px;background:#c4c4c4"></div><div class="nm" style="left:963px;top:265px">Sea200.10_Yr^:Season200^</div><div class="abs" style="left:948px;top:282px;width:231px;height:19px;background:#c3c3c3;border-top:1px solid #a5a5a5;border-left:1px solid #9a9a9a"></div><div class="abs" style="left:1179px;top:282px;width:85px;height:19px;background:#ececec;border-top:1px solid #c9c9c9;border-left:1px solid #a9a9a9"></div><div class="abs" style="left:1255px;top:282px;width:1px;height:19px;background:#c4c4c4"></div><div class="abs" style="left:948px;top:301px;width:231px;height:19px;background:#bdbdbd;border-top:1px solid #a5a5a5;border-left:1px solid #9a9a9a"></div><div class="abs" style="left:1179px;top:301px;width:85px;height:19px;background:#e3e3e3;border-top:1px solid #c9c9c9;border-left:1px solid #a9a9a9"></div><div class="abs" style="left:1255px;top:301px;width:1px;height:19px;background:#c4c4c4"></div><div class="abs" style="left:1179px;top:92px;width:77px;height:20px;border:1px solid #4e5e74;background:rgba(255,255,255,0.25)"></div><div class="abs" style="left:948px;top:320px;width:316px;height:1px;background:#dcdcdc"></div><div class="abs" style="left:948px;top:321px;width:316px;height:1.5px;background:#8a8a8a"></div><div class="abs" style="left:1263px;top:63px;width:1px;height:259px;background:#9a9a9a"></div>
<div class="win" style="left:1px;top:331px;width:1273px;height:652px;border-color:#222a2e;border-radius:7px 7px 0 0;background:linear-gradient(#94aecf 1px,#b3cde8 30px,#b9d1ea 32px,#b9d1ea 100%);box-shadow:inset 0 0 0 1px #e4f0f8"></div><div class="abs" style="left:0;top:982px;width:1274px;height:2px;background:#1c2630"></div><svg class="abs" style="left:9.8px;top:342.6px" width="15" height="15"><rect x="0" y="0" width="14" height="14" fill="#fff"/><g fill="#960c24"><path d="M1 4.2H3.3L4.1 5V8.7H1Z"/><path d="M1 4.9H3.6V5.5H1Z" fill="#fff"/><circle cx="7.2" cy="5.5" r="1.6"/><rect x="5.8" y="8.2" width="2.9" height="2.8" rx="0.6"/><path d="M10.5 3L13.3 2.1V3.6L10.5 4.6Z"/><path d="M10 7.3L13.3 4.6V8.7H10Z"/></g></svg><div class="abs" style="left:29px;top:343px;font-size:11.7px;line-height:14px;color:#0c0c14;white-space:nowrap">ZCE - Corn (Globex), Daily Continuation</div><div class="btn pin" style="left:1132px;top:342px;width:30px;height:16px"><svg class="abs" style="left:-1px;top:-1px" width="30" height="17"><circle cx="15" cy="8.5" r="4.3" fill="#c6d8f8" stroke="#111" stroke-width="1.3" stroke-dasharray="2.2 0.5"/></svg></div><div class="btn" style="background:linear-gradient(#d8e5f3,#c9daee 48%,#a3bcd9 52%,#b9cfe7);border-color:#5a7090;left:1164px;top:341px;width:31.5px;height:17.2px"><svg class="abs" style="left:-1px;top:-1px" width="32" height="18"><rect x="10.2" y="8.4" width="10.4" height="4.2" rx="1.3" fill="#f4f6f8" stroke="#2a2a2a" stroke-width="1.1"/></svg></div><div class="btn" style="background:linear-gradient(#d8e5f3,#c9daee 48%,#a3bcd9 52%,#b9cfe7);border-color:#5a7090;left:1198.4px;top:341px;width:31.2px;height:17.2px"><svg class="abs" style="left:-1px;top:-1px" width="32" height="18"><rect x="10.1" y="4.5" width="10.4" height="7.8" rx="1" fill="#f4f6f8" stroke="#2a2a2a" stroke-width="1.1"/><rect x="13" y="7" width="4.6" height="2.6" fill="none" stroke="#2a2a2a" stroke-width="1"/></svg></div><div class="btn" style="left:1232px;top:341px;width:31.5px;height:17.2px;border-color:#5e2018;background:linear-gradient(#eeb4a8,#e0907c 46%,#c8442a 54%,#d8725a)"><svg class="abs" style="left:-1px;top:-1px" width="32" height="18"><path d="M10.2 4.3 L13.3 4.3 L15.6 6.4 L17.9 4.3 L21 4.3 L17.5 8.5 L21 12.7 L17.9 12.7 L15.6 10.6 L13.3 12.7 L10.2 12.7 L13.7 8.5 Z" fill="#fff" stroke="#4a1a14" stroke-width="1.1" stroke-linejoin="round"/></svg></div><div class="abs" style="left:7px;top:362px;width:1259px;height:21px;background:#939393"></div><div class="abs" style="left:7px;top:383px;width:1259px;height:2px;background:#b4b4b4"></div><div class="abs" style="left:7px;top:385px;width:1259px;height:2px;background:#767676"></div><div class="abs" style="left:8.5px;top:363.7px;width:48.5px;height:19.5px;background:linear-gradient(#d5a45c 0,#e8c27e 4.4px,#cbcbcb 4.4px,#c6c6c6);border-left:1px solid #fafafa;border-radius:2px 2px 0 0"></div><div class="abs" style="left:15px;top:368px;font-size:11px;line-height:13px;letter-spacing:-0.8px;color:#30343c;white-space:nowrap">ZCE,DC</div><div class="abs" style="left:58px;top:365px;width:24.5px;height:18px;background:#545454;border-radius:2px 2px 0 0;border-top:1.2px solid #f4f4f4;border-left:1.2px solid #f4f4f4"></div><div class="abs" style="left:66.5px;top:366.5px;font-size:13px;line-height:16px;color:#cfcfcf;font-weight:normal">+</div><div class="abs" style="left:8px;top:387px;width:1257px;height:587.5px;background:#fff"></div><div class="abs" style="left:8px;top:387px;width:1181px;height:1.4px;background:#0a0a0a"></div><div class="abs" style="left:8.5px;top:387px;width:1.6px;height:588px;background:#333"></div><div class="abs" style="left:8px;top:974px;width:1257px;height:1.5px;background:#d8d8d8"></div><div class="abs" style="left:1265px;top:386.5px;width:1px;height:589px;background:#e0e0e0"></div><svg class="abs" style="left:0;top:0" width="1274" height="984" viewBox="0 0 1274 984" font-family="Liberation Sans, sans-serif"><path d="M157.9 896.5h1.3v1.3h-1.3zM170.9 896.5h1.3v1.3h-1.3zM183.9 896.5h1.3v1.3h-1.3zM196.9 896.5h1.3v1.3h-1.3zM209.9 896.5h1.3v1.3h-1.3zM222.9 896.5h1.3v1.3h-1.3zM235.9 896.5h1.3v1.3h-1.3zM248.9 896.5h1.3v1.3h-1.3zM261.9 896.5h1.3v1.3h-1.3zM274.9 896.5h1.3v1.3h-1.3zM287.9 896.5h1.3v1.3h-1.3zM300.9 896.5h1.3v1.3h-1.3zM313.9 896.5h1.3v1.3h-1.3zM326.9 896.5h1.3v1.3h-1.3zM339.9 896.5h1.3v1.3h-1.3zM352.9 896.5h1.3v1.3h-1.3zM365.9 896.5h1.3v1.3h-1.3zM378.9 896.5h1.3v1.3h-1.3zM391.9 896.5h1.3v1.3h-1.3zM404.9 896.5h1.3v1.3h-1.3zM417.9 896.5h1.3v1.3h-1.3zM430.9 896.5h1.3v1.3h-1.3zM443.9 896.5h1.3v1.3h-1.3zM456.9 896.5h1.3v1.3h-1.3zM469.9 896.5h1.3v1.3h-1.3zM482.9 896.5h1.3v1.3h-1.3zM495.9 896.5h1.3v1.3h-1.3zM508.9 896.5h1.3v1.3h-1.3zM521.9 896.5h1.3v1.3h-1.3zM534.9 896.5h1.3v1.3h-1.3zM547.9 896.5h1.3v1.3h-1.3zM560.9 896.5h1.3v1.3h-1.3zM573.9 896.5h1.3v1.3h-1.3zM586.9 896.5h1.3v1.3h-1.3zM599.9 896.5h1.3v1.3h-1.3zM612.9 896.5h1.3v1.3h-1.3zM625.9 896.5h1.3v1.3h-1.3zM638.9 896.5h1.3v1.3h-1.3zM651.9 896.5h1.3v1.3h-1.3zM664.9 896.5h1.3v1.3h-1.3zM677.9 896.5h1.3v1.3h-1.3zM690.9 896.5h1.3v1.3h-1.3zM703.9 896.5h1.3v1.3h-1.3zM716.9 896.5h1.3v1.3h-1.3zM729.9 896.5h1.3v1.3h-1.3zM742.9 896.5h1.3v1.3h-1.3zM755.9 896.5h1.3v1.3h-1.3zM768.9 896.5h1.3v1.3h-1.3zM781.9 896.5h1.3v1.3h-1.3zM794.9 896.5h1.3v1.3h-1.3zM807.9 896.5h1.3v1.3h-1.3zM820.9 896.5h1.3v1.3h-1.3zM833.9 896.5h1.3v1.3h-1.3zM846.9 896.5h1.3v1.3h-1.3zM859.9 896.5h1.3v1.3h-1.3zM872.9 896.5h1.3v1.3h-1.3zM885.9 896.5h1.3v1.3h-1.3zM898.9 896.5h1.3v1.3h-1.3zM911.9 896.5h1.3v1.3h-1.3zM924.9 896.5h1.3v1.3h-1.3zM937.9 896.5h1.3v1.3h-1.3zM950.9 896.5h1.3v1.3h-1.3zM963.9 896.5h1.3v1.3h-1.3zM976.9 896.5h1.3v1.3h-1.3zM989.9 896.5h1.3v1.3h-1.3zM1002.9 896.5h1.3v1.3h-1.3zM1015.9 896.5h1.3v1.3h-1.3zM1028.9 896.5h1.3v1.3h-1.3zM1041.9 896.5h1.3v1.3h-1.3zM1054.9 896.5h1.3v1.3h-1.3zM1067.9 896.5h1.3v1.3h-1.3zM1080.9 896.5h1.3v1.3h-1.3zM1093.9 896.5h1.3v1.3h-1.3zM1106.9 896.5h1.3v1.3h-1.3zM1119.9 896.5h1.3v1.3h-1.3zM1132.9 896.5h1.3v1.3h-1.3zM1145.9 896.5h1.3v1.3h-1.3zM1158.9 896.5h1.3v1.3h-1.3zM1171.9 896.5h1.3v1.3h-1.3zM157.9 820.9h1.3v1.3h-1.3zM170.9 820.9h1.3v1.3h-1.3zM183.9 820.9h1.3v1.3h-1.3zM196.9 820.9h1.3v1.3h-1.3zM209.9 820.9h1.3v1.3h-1.3zM222.9 820.9h1.3v1.3h-1.3zM235.9 820.9h1.3v1.3h-1.3zM248.9 820.9h1.3v1.3h-1.3zM261.9 820.9h1.3v1.3h-1.3zM274.9 820.9h1.3v1.3h-1.3zM287.9 820.9h1.3v1.3h-1.3zM300.9 820.9h1.3v1.3h-1.3zM313.9 820.9h1.3v1.3h-1.3zM326.9 820.9h1.3v1.3h-1.3zM339.9 820.9h1.3v1.3h-1.3zM352.9 820.9h1.3v1.3h-1.3zM365.9 820.9h1.3v1.3h-1.3zM378.9 820.9h1.3v1.3h-1.3zM391.9 820.9h1.3v1.3h-1.3zM404.9 820.9h1.3v1.3h-1.3zM417.9 820.9h1.3v1.3h-1.3zM430.9 820.9h1.3v1.3h-1.3zM443.9 820.9h1.3v1.3h-1.3zM456.9 820.9h1.3v1.3h-1.3zM469.9 820.9h1.3v1.3h-1.3zM482.9 820.9h1.3v1.3h-1.3zM495.9 820.9h1.3v1.3h-1.3zM508.9 820.9h1.3v1.3h-1.3zM521.9 820.9h1.3v1.3h-1.3zM534.9 820.9h1.3v1.3h-1.3zM547.9 820.9h1.3v1.3h-1.3zM560.9 820.9h1.3v1.3h-1.3zM573.9 820.9h1.3v1.3h-1.3zM586.9 820.9h1.3v1.3h-1.3zM599.9 820.9h1.3v1.3h-1.3zM612.9 820.9h1.3v1.3h-1.3zM625.9 820.9h1.3v1.3h-1.3zM638.9 820.9h1.3v1.3h-1.3zM651.9 820.9h1.3v1.3h-1.3zM664.9 820.9h1.3v1.3h-1.3zM677.9 820.9h1.3v1.3h-1.3zM690.9 820.9h1.3v1.3h-1.3zM703.9 820.9h1.3v1.3h-1.3zM716.9 820.9h1.3v1.3h-1.3zM729.9 820.9h1.3v1.3h-1.3zM742.9 820.9h1.3v1.3h-1.3zM755.9 820.9h1.3v1.3h-1.3zM768.9 820.9h1.3v1.3h-1.3zM781.9 820.9h1.3v1.3h-1.3zM794.9 820.9h1.3v1.3h-1.3zM807.9 820.9h1.3v1.3h-1.3zM820.9 820.9h1.3v1.3h-1.3zM833.9 820.9h1.3v1.3h-1.3zM846.9 820.9h1.3v1.3h-1.3zM859.9 820.9h1.3v1.3h-1.3zM872.9 820.9h1.3v1.3h-1.3zM885.9 820.9h1.3v1.3h-1.3zM898.9 820.9h1.3v1.3h-1.3zM911.9 820.9h1.3v1.3h-1.3zM924.9 820.9h1.3v1.3h-1.3zM937.9 820.9h1.3v1.3h-1.3zM950.9 820.9h1.3v1.3h-1.3zM963.9 820.9h1.3v1.3h-1.3zM976.9 820.9h1.3v1.3h-1.3zM989.9 820.9h1.3v1.3h-1.3zM1002.9 820.9h1.3v1.3h-1.3zM1015.9 820.9h1.3v1.3h-1.3zM1028.9 820.9h1.3v1.3h-1.3zM1041.9 820.9h1.3v1.3h-1.3zM1054.9 820.9h1.3v1.3h-1.3zM1067.9 820.9h1.3v1.3h-1.3zM1080.9 820.9h1.3v1.3h-1.3zM1093.9 820.9h1.3v1.3h-1.3zM1106.9 820.9h1.3v1.3h-1.3zM1119.9 820.9h1.3v1.3h-1.3zM1132.9 820.9h1.3v1.3h-1.3zM1145.9 820.9h1.3v1.3h-1.3zM1158.9 820.9h1.3v1.3h-1.3zM1171.9 820.9h1.3v1.3h-1.3zM14.9 745.3h1.3v1.3h-1.3zM27.9 745.3h1.3v1.3h-1.3zM40.9 745.3h1.3v1.3h-1.3zM53.9 745.3h1.3v1.3h-1.3zM66.9 745.3h1.3v1.3h-1.3zM79.9 745.3h1.3v1.3h-1.3zM92.9 745.3h1.3v1.3h-1.3zM105.9 745.3h1.3v1.3h-1.3zM118.9 745.3h1.3v1.3h-1.3zM131.9 745.3h1.3v1.3h-1.3zM144.9 745.3h1.3v1.3h-1.3zM157.9 745.3h1.3v1.3h-1.3zM170.9 745.3h1.3v1.3h-1.3zM183.9 745.3h1.3v1.3h-1.3zM196.9 745.3h1.3v1.3h-1.3zM209.9 745.3h1.3v1.3h-1.3zM222.9 745.3h1.3v1.3h-1.3zM235.9 745.3h1.3v1.3h-1.3zM248.9 745.3h1.3v1.3h-1.3zM261.9 745.3h1.3v1.3h-1.3zM274.9 745.3h1.3v1.3h-1.3zM287.9 745.3h1.3v1.3h-1.3zM300.9 745.3h1.3v1.3h-1.3zM313.9 745.3h1.3v1.3h-1.3zM326.9 745.3h1.3v1.3h-1.3zM339.9 745.3h1.3v1.3h-1.3zM352.9 745.3h1.3v1.3h-1.3zM365.9 745.3h1.3v1.3h-1.3zM378.9 745.3h1.3v1.3h-1.3zM391.9 745.3h1.3v1.3h-1.3zM404.9 745.3h1.3v1.3h-1.3zM417.9 745.3h1.3v1.3h-1.3zM430.9 745.3h1.3v1.3h-1.3zM443.9 745.3h1.3v1.3h-1.3zM456.9 745.3h1.3v1.3h-1.3zM469.9 745.3h1.3v1.3h-1.3zM482.9 745.3h1.3v1.3h-1.3zM495.9 745.3h1.3v1.3h-1.3zM508.9 745.3h1.3v1.3h-1.3zM521.9 745.3h1.3v1.3h-1.3zM534.9 745.3h1.3v1.3h-1.3zM547.9 745.3h1.3v1.3h-1.3zM560.9 745.3h1.3v1.3h-1.3zM573.9 745.3h1.3v1.3h-1.3zM586.9 745.3h1.3v1.3h-1.3zM599.9 745.3h1.3v1.3h-1.3zM612.9 745.3h1.3v1.3h-1.3zM625.9 745.3h1.3v1.3h-1.3zM638.9 745.3h1.3v1.3h-1.3zM651.9 745.3h1.3v1.3h-1.3zM664.9 745.3h1.3v1.3h-1.3zM677.9 745.3h1.3v1.3h-1.3zM690.9 745.3h1.3v1.3h-1.3zM703.9 745.3h1.3v1.3h-1.3zM716.9 745.3h1.3v1.3h-1.3zM729.9 745.3h1.3v1.3h-1.3zM742.9 745.3h1.3v1.3h-1.3zM755.9 745.3h1.3v1.3h-1.3zM768.9 745.3h1.3v1.3h-1.3zM781.9 745.3h1.3v1.3h-1.3zM794.9 745.3h1.3v1.3h-1.3zM807.9 745.3h1.3v1.3h-1.3zM820.9 745.3h1.3v1.3h-1.3zM833.9 745.3h1.3v1.3h-1.3zM846.9 745.3h1.3v1.3h-1.3zM859.9 745.3h1.3v1.3h-1.3zM872.9 745.3h1.3v1.3h-1.3zM885.9 745.3h1.3v1.3h-1.3zM898.9 745.3h1.3v1.3h-1.3zM911.9 745.3h1.3v1.3h-1.3zM924.9 745.3h1.3v1.3h-1.3zM937.9 745.3h1.3v1.3h-1.3zM950.9 745.3h1.3v1.3h-1.3zM963.9 745.3h1.3v1.3h-1.3zM976.9 745.3h1.3v1.3h-1.3zM989.9 745.3h1.3v1.3h-1.3zM1002.9 745.3h1.3v1.3h-1.3zM1015.9 745.3h1.3v1.3h-1.3zM1028.9 745.3h1.3v1.3h-1.3zM1041.9 745.3h1.3v1.3h-1.3zM1054.9 745.3h1.3v1.3h-1.3zM1067.9 745.3h1.3v1.3h-1.3zM1080.9 745.3h1.3v1.3h-1.3zM1093.9 745.3h1.3v1.3h-1.3zM1106.9 745.3h1.3v1.3h-1.3zM1119.9 745.3h1.3v1.3h-1.3zM1132.9 745.3h1.3v1.3h-1.3zM1145.9 745.3h1.3v1.3h-1.3zM1158.9 745.3h1.3v1.3h-1.3zM1171.9 745.3h1.3v1.3h-1.3zM14.9 669.7h1.3v1.3h-1.3zM27.9 669.7h1.3v1.3h-1.3zM40.9 669.7h1.3v1.3h-1.3zM53.9 669.7h1.3v1.3h-1.3zM66.9 669.7h1.3v1.3h-1.3zM79.9 669.7h1.3v1.3h-1.3zM92.9 669.7h1.3v1.3h-1.3zM105.9 669.7h1.3v1.3h-1.3zM118.9 669.7h1.3v1.3h-1.3zM131.9 669.7h1.3v1.3h-1.3zM144.9 669.7h1.3v1.3h-1.3zM157.9 669.7h1.3v1.3h-1.3zM170.9 669.7h1.3v1.3h-1.3zM183.9 669.7h1.3v1.3h-1.3zM196.9 669.7h1.3v1.3h-1.3zM209.9 669.7h1.3v1.3h-1.3zM222.9 669.7h1.3v1.3h-1.3zM235.9 669.7h1.3v1.3h-1.3zM248.9 669.7h1.3v1.3h-1.3zM261.9 669.7h1.3v1.3h-1.3zM274.9 669.7h1.3v1.3h-1.3zM287.9 669.7h1.3v1.3h-1.3zM300.9 669.7h1.3v1.3h-1.3zM313.9 669.7h1.3v1.3h-1.3zM326.9 669.7h1.3v1.3h-1.3zM339.9 669.7h1.3v1.3h-1.3zM352.9 669.7h1.3v1.3h-1.3zM365.9 669.7h1.3v1.3h-1.3zM378.9 669.7h1.3v1.3h-1.3zM391.9 669.7h1.3v1.3h-1.3zM404.9 669.7h1.3v1.3h-1.3zM417.9 669.7h1.3v1.3h-1.3zM430.9 669.7h1.3v1.3h-1.3zM443.9 669.7h1.3v1.3h-1.3zM456.9 669.7h1.3v1.3h-1.3zM469.9 669.7h1.3v1.3h-1.3zM482.9 669.7h1.3v1.3h-1.3zM495.9 669.7h1.3v1.3h-1.3zM508.9 669.7h1.3v1.3h-1.3zM521.9 669.7h1.3v1.3h-1.3zM534.9 669.7h1.3v1.3h-1.3zM547.9 669.7h1.3v1.3h-1.3zM560.9 669.7h1.3v1.3h-1.3zM573.9 669.7h1.3v1.3h-1.3zM586.9 669.7h1.3v1.3h-1.3zM599.9 669.7h1.3v1.3h-1.3zM612.9 669.7h1.3v1.3h-1.3zM625.9 669.7h1.3v1.3h-1.3zM638.9 669.7h1.3v1.3h-1.3zM651.9 669.7h1.3v1.3h-1.3zM664.9 669.7h1.3v1.3h-1.3zM677.9 669.7h1.3v1.3h-1.3zM690.9 669.7h1.3v1.3h-1.3zM703.9 669.7h1.3v1.3h-1.3zM716.9 669.7h1.3v1.3h-1.3zM729.9 669.7h1.3v1.3h-1.3zM742.9 669.7h1.3v1.3h-1.3zM755.9 669.7h1.3v1.3h-1.3zM768.9 669.7h1.3v1.3h-1.3zM781.9 669.7h1.3v1.3h-1.3zM794.9 669.7h1.3v1.3h-1.3zM807.9 669.7h1.3v1.3h-1.3zM820.9 669.7h1.3v1.3h-1.3zM833.9 669.7h1.3v1.3h-1.3zM846.9 669.7h1.3v1.3h-1.3zM859.9 669.7h1.3v1.3h-1.3zM872.9 669.7h1.3v1.3h-1.3zM885.9 669.7h1.3v1.3h-1.3zM898.9 669.7h1.3v1.3h-1.3zM911.9 669.7h1.3v1.3h-1.3zM924.9 669.7h1.3v1.3h-1.3zM937.9 669.7h1.3v1.3h-1.3zM950.9 669.7h1.3v1.3h-1.3zM963.9 669.7h1.3v1.3h-1.3zM976.9 669.7h1.3v1.3h-1.3zM989.9 669.7h1.3v1.3h-1.3zM1002.9 669.7h1.3v1.3h-1.3zM1015.9 669.7h1.3v1.3h-1.3zM1028.9 669.7h1.3v1.3h-1.3zM1041.9 669.7h1.3v1.3h-1.3zM1054.9 669.7h1.3v1.3h-1.3zM1067.9 669.7h1.3v1.3h-1.3zM1080.9 669.7h1.3v1.3h-1.3zM1093.9 669.7h1.3v1.3h-1.3zM1106.9 669.7h1.3v1.3h-1.3zM1119.9 669.7h1.3v1.3h-1.3zM1132.9 669.7h1.3v1.3h-1.3zM1145.9 669.7h1.3v1.3h-1.3zM1158.9 669.7h1.3v1.3h-1.3zM1171.9 669.7h1.3v1.3h-1.3zM14.9 594.1h1.3v1.3h-1.3zM27.9 594.1h1.3v1.3h-1.3zM40.9 594.1h1.3v1.3h-1.3zM53.9 594.1h1.3v1.3h-1.3zM66.9 594.1h1.3v1.3h-1.3zM79.9 594.1h1.3v1.3h-1.3zM92.9 594.1h1.3v1.3h-1.3zM105.9 594.1h1.3v1.3h-1.3zM118.9 594.1h1.3v1.3h-1.3zM131.9 594.1h1.3v1.3h-1.3zM144.9 594.1h1.3v1.3h-1.3zM157.9 594.1h1.3v1.3h-1.3zM170.9 594.1h1.3v1.3h-1.3zM183.9 594.1h1.3v1.3h-1.3zM196.9 594.1h1.3v1.3h-1.3zM209.9 594.1h1.3v1.3h-1.3zM222.9 594.1h1.3v1.3h-1.3zM235.9 594.1h1.3v1.3h-1.3zM248.9 594.1h1.3v1.3h-1.3zM261.9 594.1h1.3v1.3h-1.3zM274.9 594.1h1.3v1.3h-1.3zM287.9 594.1h1.3v1.3h-1.3zM300.9 594.1h1.3v1.3h-1.3zM313.9 594.1h1.3v1.3h-1.3zM326.9 594.1h1.3v1.3h-1.3zM339.9 594.1h1.3v1.3h-1.3zM352.9 594.1h1.3v1.3h-1.3zM365.9 594.1h1.3v1.3h-1.3zM378.9 594.1h1.3v1.3h-1.3zM391.9 594.1h1.3v1.3h-1.3zM404.9 594.1h1.3v1.3h-1.3zM417.9 594.1h1.3v1.3h-1.3zM430.9 594.1h1.3v1.3h-1.3zM443.9 594.1h1.3v1.3h-1.3zM456.9 594.1h1.3v1.3h-1.3zM469.9 594.1h1.3v1.3h-1.3zM482.9 594.1h1.3v1.3h-1.3zM495.9 594.1h1.3v1.3h-1.3zM508.9 594.1h1.3v1.3h-1.3zM521.9 594.1h1.3v1.3h-1.3zM534.9 594.1h1.3v1.3h-1.3zM547.9 594.1h1.3v1.3h-1.3zM560.9 594.1h1.3v1.3h-1.3zM573.9 594.1h1.3v1.3h-1.3zM586.9 594.1h1.3v1.3h-1.3zM599.9 594.1h1.3v1.3h-1.3zM612.9 594.1h1.3v1.3h-1.3zM625.9 594.1h1.3v1.3h-1.3zM638.9 594.1h1.3v1.3h-1.3zM651.9 594.1h1.3v1.3h-1.3zM664.9 594.1h1.3v1.3h-1.3zM677.9 594.1h1.3v1.3h-1.3zM690.9 594.1h1.3v1.3h-1.3zM703.9 594.1h1.3v1.3h-1.3zM716.9 594.1h1.3v1.3h-1.3zM729.9 594.1h1.3v1.3h-1.3zM742.9 594.1h1.3v1.3h-1.3zM755.9 594.1h1.3v1.3h-1.3zM768.9 594.1h1.3v1.3h-1.3zM781.9 594.1h1.3v1.3h-1.3zM794.9 594.1h1.3v1.3h-1.3zM807.9 594.1h1.3v1.3h-1.3zM820.9 594.1h1.3v1.3h-1.3zM833.9 594.1h1.3v1.3h-1.3zM846.9 594.1h1.3v1.3h-1.3zM859.9 594.1h1.3v1.3h-1.3zM872.9 594.1h1.3v1.3h-1.3zM885.9 594.1h1.3v1.3h-1.3zM898.9 594.1h1.3v1.3h-1.3zM911.9 594.1h1.3v1.3h-1.3zM924.9 594.1h1.3v1.3h-1.3zM937.9 594.1h1.3v1.3h-1.3zM950.9 594.1h1.3v1.3h-1.3zM963.9 594.1h1.3v1.3h-1.3zM976.9 594.1h1.3v1.3h-1.3zM989.9 594.1h1.3v1.3h-1.3zM1002.9 594.1h1.3v1.3h-1.3zM1015.9 594.1h1.3v1.3h-1.3zM1028.9 594.1h1.3v1.3h-1.3zM1041.9 594.1h1.3v1.3h-1.3zM1054.9 594.1h1.3v1.3h-1.3zM1067.9 594.1h1.3v1.3h-1.3zM1080.9 594.1h1.3v1.3h-1.3zM1093.9 594.1h1.3v1.3h-1.3zM1106.9 594.1h1.3v1.3h-1.3zM1119.9 594.1h1.3v1.3h-1.3zM1132.9 594.1h1.3v1.3h-1.3zM1145.9 594.1h1.3v1.3h-1.3zM1158.9 594.1h1.3v1.3h-1.3zM1171.9 594.1h1.3v1.3h-1.3zM14.9 518.5h1.3v1.3h-1.3zM27.9 518.5h1.3v1.3h-1.3zM40.9 518.5h1.3v1.3h-1.3zM53.9 518.5h1.3v1.3h-1.3zM66.9 518.5h1.3v1.3h-1.3zM79.9 518.5h1.3v1.3h-1.3zM92.9 518.5h1.3v1.3h-1.3zM105.9 518.5h1.3v1.3h-1.3zM118.9 518.5h1.3v1.3h-1.3zM131.9 518.5h1.3v1.3h-1.3zM144.9 518.5h1.3v1.3h-1.3zM157.9 518.5h1.3v1.3h-1.3zM170.9 518.5h1.3v1.3h-1.3zM183.9 518.5h1.3v1.3h-1.3zM196.9 518.5h1.3v1.3h-1.3zM209.9 518.5h1.3v1.3h-1.3zM222.9 518.5h1.3v1.3h-1.3zM235.9 518.5h1.3v1.3h-1.3zM248.9 518.5h1.3v1.3h-1.3zM261.9 518.5h1.3v1.3h-1.3zM274.9 518.5h1.3v1.3h-1.3zM287.9 518.5h1.3v1.3h-1.3zM300.9 518.5h1.3v1.3h-1.3zM313.9 518.5h1.3v1.3h-1.3zM326.9 518.5h1.3v1.3h-1.3zM339.9 518.5h1.3v1.3h-1.3zM352.9 518.5h1.3v1.3h-1.3zM365.9 518.5h1.3v1.3h-1.3zM378.9 518.5h1.3v1.3h-1.3zM391.9 518.5h1.3v1.3h-1.3zM404.9 518.5h1.3v1.3h-1.3zM417.9 518.5h1.3v1.3h-1.3zM430.9 518.5h1.3v1.3h-1.3zM443.9 518.5h1.3v1.3h-1.3zM456.9 518.5h1.3v1.3h-1.3zM469.9 518.5h1.3v1.3h-1.3zM482.9 518.5h1.3v1.3h-1.3zM495.9 518.5h1.3v1.3h-1.3zM508.9 518.5h1.3v1.3h-1.3zM521.9 518.5h1.3v1.3h-1.3zM534.9 518.5h1.3v1.3h-1.3zM547.9 518.5h1.3v1.3h-1.3zM560.9 518.5h1.3v1.3h-1.3zM573.9 518.5h1.3v1.3h-1.3zM586.9 518.5h1.3v1.3h-1.3zM599.9 518.5h1.3v1.3h-1.3zM612.9 518.5h1.3v1.3h-1.3zM625.9 518.5h1.3v1.3h-1.3zM638.9 518.5h1.3v1.3h-1.3zM651.9 518.5h1.3v1.3h-1.3zM664.9 518.5h1.3v1.3h-1.3zM677.9 518.5h1.3v1.3h-1.3zM690.9 518.5h1.3v1.3h-1.3zM703.9 518.5h1.3v1.3h-1.3zM716.9 518.5h1.3v1.3h-1.3zM729.9 518.5h1.3v1.3h-1.3zM742.9 518.5h1.3v1.3h-1.3zM755.9 518.5h1.3v1.3h-1.3zM768.9 518.5h1.3v1.3h-1.3zM781.9 518.5h1.3v1.3h-1.3zM794.9 518.5h1.3v1.3h-1.3zM807.9 518.5h1.3v1.3h-1.3zM820.9 518.5h1.3v1.3h-1.3zM833.9 518.5h1.3v1.3h-1.3zM846.9 518.5h1.3v1.3h-1.3zM859.9 518.5h1.3v1.3h-1.3zM872.9 518.5h1.3v1.3h-1.3zM885.9 518.5h1.3v1.3h-1.3zM898.9 518.5h1.3v1.3h-1.3zM911.9 518.5h1.3v1.3h-1.3zM924.9 518.5h1.3v1.3h-1.3zM937.9 518.5h1.3v1.3h-1.3zM950.9 518.5h1.3v1.3h-1.3zM963.9 518.5h1.3v1.3h-1.3zM976.9 518.5h1.3v1.3h-1.3zM989.9 518.5h1.3v1.3h-1.3zM1002.9 518.5h1.3v1.3h-1.3zM1015.9 518.5h1.3v1.3h-1.3zM1028.9 518.5h1.3v1.3h-1.3zM1041.9 518.5h1.3v1.3h-1.3zM1054.9 518.5h1.3v1.3h-1.3zM1067.9 518.5h1.3v1.3h-1.3zM1080.9 518.5h1.3v1.3h-1.3zM1093.9 518.5h1.3v1.3h-1.3zM1106.9 518.5h1.3v1.3h-1.3zM1119.9 518.5h1.3v1.3h-1.3zM1132.9 518.5h1.3v1.3h-1.3zM1145.9 518.5h1.3v1.3h-1.3zM1158.9 518.5h1.3v1.3h-1.3zM1171.9 518.5h1.3v1.3h-1.3zM14.9 442.9h1.3v1.3h-1.3zM27.9 442.9h1.3v1.3h-1.3zM40.9 442.9h1.3v1.3h-1.3zM53.9 442.9h1.3v1.3h-1.3zM66.9 442.9h1.3v1.3h-1.3zM79.9 442.9h1.3v1.3h-1.3zM92.9 442.9h1.3v1.3h-1.3zM105.9 442.9h1.3v1.3h-1.3zM118.9 442.9h1.3v1.3h-1.3zM131.9 442.9h1.3v1.3h-1.3zM144.9 442.9h1.3v1.3h-1.3zM157.9 442.9h1.3v1.3h-1.3zM170.9 442.9h1.3v1.3h-1.3zM183.9 442.9h1.3v1.3h-1.3zM196.9 442.9h1.3v1.3h-1.3zM209.9 442.9h1.3v1.3h-1.3zM222.9 442.9h1.3v1.3h-1.3zM235.9 442.9h1.3v1.3h-1.3zM248.9 442.9h1.3v1.3h-1.3zM261.9 442.9h1.3v1.3h-1.3zM274.9 442.9h1.3v1.3h-1.3zM287.9 442.9h1.3v1.3h-1.3zM300.9 442.9h1.3v1.3h-1.3zM313.9 442.9h1.3v1.3h-1.3zM326.9 442.9h1.3v1.3h-1.3zM339.9 442.9h1.3v1.3h-1.3zM352.9 442.9h1.3v1.3h-1.3zM365.9 442.9h1.3v1.3h-1.3zM378.9 442.9h1.3v1.3h-1.3zM391.9 442.9h1.3v1.3h-1.3zM404.9 442.9h1.3v1.3h-1.3zM417.9 442.9h1.3v1.3h-1.3zM430.9 442.9h1.3v1.3h-1.3zM443.9 442.9h1.3v1.3h-1.3zM456.9 442.9h1.3v1.3h-1.3zM469.9 442.9h1.3v1.3h-1.3zM482.9 442.9h1.3v1.3h-1.3zM495.9 442.9h1.3v1.3h-1.3zM508.9 442.9h1.3v1.3h-1.3zM521.9 442.9h1.3v1.3h-1.3zM534.9 442.9h1.3v1.3h-1.3zM547.9 442.9h1.3v1.3h-1.3zM560.9 442.9h1.3v1.3h-1.3zM573.9 442.9h1.3v1.3h-1.3zM586.9 442.9h1.3v1.3h-1.3zM599.9 442.9h1.3v1.3h-1.3zM612.9 442.9h1.3v1.3h-1.3zM625.9 442.9h1.3v1.3h-1.3zM638.9 442.9h1.3v1.3h-1.3zM651.9 442.9h1.3v1.3h-1.3zM664.9 442.9h1.3v1.3h-1.3zM677.9 442.9h1.3v1.3h-1.3zM690.9 442.9h1.3v1.3h-1.3zM703.9 442.9h1.3v1.3h-1.3zM716.9 442.9h1.3v1.3h-1.3zM729.9 442.9h1.3v1.3h-1.3zM742.9 442.9h1.3v1.3h-1.3zM755.9 442.9h1.3v1.3h-1.3zM768.9 442.9h1.3v1.3h-1.3zM781.9 442.9h1.3v1.3h-1.3zM794.9 442.9h1.3v1.3h-1.3zM807.9 442.9h1.3v1.3h-1.3zM820.9 442.9h1.3v1.3h-1.3zM833.9 442.9h1.3v1.3h-1.3zM846.9 442.9h1.3v1.3h-1.3zM859.9 442.9h1.3v1.3h-1.3zM872.9 442.9h1.3v1.3h-1.3zM885.9 442.9h1.3v1.3h-1.3zM898.9 442.9h1.3v1.3h-1.3zM911.9 442.9h1.3v1.3h-1.3zM924.9 442.9h1.3v1.3h-1.3zM937.9 442.9h1.3v1.3h-1.3zM950.9 442.9h1.3v1.3h-1.3zM963.9 442.9h1.3v1.3h-1.3zM976.9 442.9h1.3v1.3h-1.3zM989.9 442.9h1.3v1.3h-1.3zM1002.9 442.9h1.3v1.3h-1.3zM1015.9 442.9h1.3v1.3h-1.3zM1028.9 442.9h1.3v1.3h-1.3zM1041.9 442.9h1.3v1.3h-1.3zM1054.9 442.9h1.3v1.3h-1.3zM1067.9 442.9h1.3v1.3h-1.3zM1080.9 442.9h1.3v1.3h-1.3zM1093.9 442.9h1.3v1.3h-1.3zM1106.9 442.9h1.3v1.3h-1.3zM1119.9 442.9h1.3v1.3h-1.3zM1132.9 442.9h1.3v1.3h-1.3zM1145.9 442.9h1.3v1.3h-1.3zM1158.9 442.9h1.3v1.3h-1.3zM1171.9 442.9h1.3v1.3h-1.3zM196.9 934.3h1.3v1.3h-1.3zM261.9 934.3h1.3v1.3h-1.3zM326.9 934.3h1.3v1.3h-1.3zM391.9 934.3h1.3v1.3h-1.3zM456.9 934.3h1.3v1.3h-1.3zM508.9 934.3h1.3v1.3h-1.3zM573.9 934.3h1.3v1.3h-1.3zM638.9 934.3h1.3v1.3h-1.3zM690.9 934.3h1.3v1.3h-1.3zM755.9 934.3h1.3v1.3h-1.3zM807.9 934.3h1.3v1.3h-1.3zM872.9 934.3h1.3v1.3h-1.3zM937.9 934.3h1.3v1.3h-1.3zM1002.9 934.3h1.3v1.3h-1.3zM1067.9 934.3h1.3v1.3h-1.3zM1132.9 934.3h1.3v1.3h-1.3zM196.9 858.7h1.3v1.3h-1.3zM261.9 858.7h1.3v1.3h-1.3zM326.9 858.7h1.3v1.3h-1.3zM391.9 858.7h1.3v1.3h-1.3zM456.9 858.7h1.3v1.3h-1.3zM508.9 858.7h1.3v1.3h-1.3zM573.9 858.7h1.3v1.3h-1.3zM638.9 858.7h1.3v1.3h-1.3zM690.9 858.7h1.3v1.3h-1.3zM755.9 858.7h1.3v1.3h-1.3zM807.9 858.7h1.3v1.3h-1.3zM872.9 858.7h1.3v1.3h-1.3zM937.9 858.7h1.3v1.3h-1.3zM1002.9 858.7h1.3v1.3h-1.3zM1067.9 858.7h1.3v1.3h-1.3zM1132.9 858.7h1.3v1.3h-1.3zM14.9 783.1h1.3v1.3h-1.3zM79.9 783.1h1.3v1.3h-1.3zM131.9 783.1h1.3v1.3h-1.3zM196.9 783.1h1.3v1.3h-1.3zM261.9 783.1h1.3v1.3h-1.3zM326.9 783.1h1.3v1.3h-1.3zM391.9 783.1h1.3v1.3h-1.3zM456.9 783.1h1.3v1.3h-1.3zM508.9 783.1h1.3v1.3h-1.3zM573.9 783.1h1.3v1.3h-1.3zM638.9 783.1h1.3v1.3h-1.3zM690.9 783.1h1.3v1.3h-1.3zM755.9 783.1h1.3v1.3h-1.3zM807.9 783.1h1.3v1.3h-1.3zM872.9 783.1h1.3v1.3h-1.3zM937.9 783.1h1.3v1.3h-1.3zM1002.9 783.1h1.3v1.3h-1.3zM1067.9 783.1h1.3v1.3h-1.3zM1132.9 783.1h1.3v1.3h-1.3zM14.9 707.5h1.3v1.3h-1.3zM79.9 707.5h1.3v1.3h-1.3zM131.9 707.5h1.3v1.3h-1.3zM196.9 707.5h1.3v1.3h-1.3zM261.9 707.5h1.3v1.3h-1.3zM326.9 707.5h1.3v1.3h-1.3zM391.9 707.5h1.3v1.3h-1.3zM456.9 707.5h1.3v1.3h-1.3zM508.9 707.5h1.3v1.3h-1.3zM573.9 707.5h1.3v1.3h-1.3zM638.9 707.5h1.3v1.3h-1.3zM690.9 707.5h1.3v1.3h-1.3zM755.9 707.5h1.3v1.3h-1.3zM807.9 707.5h1.3v1.3h-1.3zM872.9 707.5h1.3v1.3h-1.3zM937.9 707.5h1.3v1.3h-1.3zM1002.9 707.5h1.3v1.3h-1.3zM1067.9 707.5h1.3v1.3h-1.3zM1132.9 707.5h1.3v1.3h-1.3zM14.9 631.9h1.3v1.3h-1.3zM79.9 631.9h1.3v1.3h-1.3zM131.9 631.9h1.3v1.3h-1.3zM196.9 631.9h1.3v1.3h-1.3zM261.9 631.9h1.3v1.3h-1.3zM326.9 631.9h1.3v1.3h-1.3zM391.9 631.9h1.3v1.3h-1.3zM456.9 631.9h1.3v1.3h-1.3zM508.9 631.9h1.3v1.3h-1.3zM573.9 631.9h1.3v1.3h-1.3zM638.9 631.9h1.3v1.3h-1.3zM690.9 631.9h1.3v1.3h-1.3zM755.9 631.9h1.3v1.3h-1.3zM807.9 631.9h1.3v1.3h-1.3zM872.9 631.9h1.3v1.3h-1.3zM937.9 631.9h1.3v1.3h-1.3zM1002.9 631.9h1.3v1.3h-1.3zM1067.9 631.9h1.3v1.3h-1.3zM1132.9 631.9h1.3v1.3h-1.3zM14.9 556.3h1.3v1.3h-1.3zM79.9 556.3h1.3v1.3h-1.3zM131.9 556.3h1.3v1.3h-1.3zM196.9 556.3h1.3v1.3h-1.3zM261.9 556.3h1.3v1.3h-1.3zM326.9 556.3h1.3v1.3h-1.3zM391.9 556.3h1.3v1.3h-1.3zM456.9 556.3h1.3v1.3h-1.3zM508.9 556.3h1.3v1.3h-1.3zM573.9 556.3h1.3v1.3h-1.3zM638.9 556.3h1.3v1.3h-1.3zM690.9 556.3h1.3v1.3h-1.3zM755.9 556.3h1.3v1.3h-1.3zM807.9 556.3h1.3v1.3h-1.3zM872.9 556.3h1.3v1.3h-1.3zM937.9 556.3h1.3v1.3h-1.3zM1002.9 556.3h1.3v1.3h-1.3zM1067.9 556.3h1.3v1.3h-1.3zM1132.9 556.3h1.3v1.3h-1.3zM14.9 480.7h1.3v1.3h-1.3zM79.9 480.7h1.3v1.3h-1.3zM131.9 480.7h1.3v1.3h-1.3zM196.9 480.7h1.3v1.3h-1.3zM261.9 480.7h1.3v1.3h-1.3zM326.9 480.7h1.3v1.3h-1.3zM391.9 480.7h1.3v1.3h-1.3zM456.9 480.7h1.3v1.3h-1.3zM508.9 480.7h1.3v1.3h-1.3zM573.9 480.7h1.3v1.3h-1.3zM638.9 480.7h1.3v1.3h-1.3zM690.9 480.7h1.3v1.3h-1.3zM755.9 480.7h1.3v1.3h-1.3zM807.9 480.7h1.3v1.3h-1.3zM872.9 480.7h1.3v1.3h-1.3zM937.9 480.7h1.3v1.3h-1.3zM1002.9 480.7h1.3v1.3h-1.3zM1067.9 480.7h1.3v1.3h-1.3zM1132.9 480.7h1.3v1.3h-1.3zM14.9 405.1h1.3v1.3h-1.3zM79.9 405.1h1.3v1.3h-1.3zM131.9 405.1h1.3v1.3h-1.3zM196.9 405.1h1.3v1.3h-1.3zM261.9 405.1h1.3v1.3h-1.3zM326.9 405.1h1.3v1.3h-1.3zM391.9 405.1h1.3v1.3h-1.3zM456.9 405.1h1.3v1.3h-1.3zM508.9 405.1h1.3v1.3h-1.3zM573.9 405.1h1.3v1.3h-1.3zM638.9 405.1h1.3v1.3h-1.3zM690.9 405.1h1.3v1.3h-1.3zM755.9 405.1h1.3v1.3h-1.3zM807.9 405.1h1.3v1.3h-1.3zM872.9 405.1h1.3v1.3h-1.3zM937.9 405.1h1.3v1.3h-1.3zM1002.9 405.1h1.3v1.3h-1.3zM1067.9 405.1h1.3v1.3h-1.3zM1132.9 405.1h1.3v1.3h-1.3zM235.9 390.0h1.3v1.3h-1.3zM235.9 397.5h1.3v1.3h-1.3zM235.9 405.1h1.3v1.3h-1.3zM235.9 412.7h1.3v1.3h-1.3zM235.9 420.2h1.3v1.3h-1.3zM235.9 427.8h1.3v1.3h-1.3zM235.9 435.3h1.3v1.3h-1.3zM235.9 442.9h1.3v1.3h-1.3zM235.9 450.5h1.3v1.3h-1.3zM235.9 458.0h1.3v1.3h-1.3zM235.9 465.6h1.3v1.3h-1.3zM235.9 473.1h1.3v1.3h-1.3zM235.9 480.7h1.3v1.3h-1.3zM235.9 488.3h1.3v1.3h-1.3zM235.9 495.8h1.3v1.3h-1.3zM235.9 503.4h1.3v1.3h-1.3zM235.9 510.9h1.3v1.3h-1.3zM235.9 518.5h1.3v1.3h-1.3zM235.9 526.1h1.3v1.3h-1.3zM235.9 533.6h1.3v1.3h-1.3zM235.9 541.2h1.3v1.3h-1.3zM235.9 548.7h1.3v1.3h-1.3zM235.9 556.3h1.3v1.3h-1.3zM235.9 563.9h1.3v1.3h-1.3zM235.9 571.4h1.3v1.3h-1.3zM235.9 579.0h1.3v1.3h-1.3zM235.9 586.5h1.3v1.3h-1.3zM235.9 594.1h1.3v1.3h-1.3zM235.9 601.7h1.3v1.3h-1.3zM235.9 609.2h1.3v1.3h-1.3zM235.9 616.8h1.3v1.3h-1.3zM235.9 624.3h1.3v1.3h-1.3zM235.9 631.9h1.3v1.3h-1.3zM235.9 639.5h1.3v1.3h-1.3zM235.9 647.0h1.3v1.3h-1.3zM235.9 654.6h1.3v1.3h-1.3zM235.9 662.1h1.3v1.3h-1.3zM235.9 669.7h1.3v1.3h-1.3zM235.9 677.3h1.3v1.3h-1.3zM235.9 684.8h1.3v1.3h-1.3zM235.9 692.4h1.3v1.3h-1.3zM235.9 699.9h1.3v1.3h-1.3zM235.9 707.5h1.3v1.3h-1.3zM235.9 715.1h1.3v1.3h-1.3zM235.9 722.6h1.3v1.3h-1.3zM235.9 730.2h1.3v1.3h-1.3zM235.9 737.7h1.3v1.3h-1.3zM235.9 745.3h1.3v1.3h-1.3zM235.9 752.9h1.3v1.3h-1.3zM235.9 760.4h1.3v1.3h-1.3zM235.9 768.0h1.3v1.3h-1.3zM235.9 775.5h1.3v1.3h-1.3zM235.9 783.1h1.3v1.3h-1.3zM235.9 790.7h1.3v1.3h-1.3zM235.9 798.2h1.3v1.3h-1.3zM235.9 805.8h1.3v1.3h-1.3zM235.9 813.3h1.3v1.3h-1.3zM235.9 820.9h1.3v1.3h-1.3zM235.9 828.5h1.3v1.3h-1.3zM235.9 836.0h1.3v1.3h-1.3zM235.9 843.6h1.3v1.3h-1.3zM235.9 851.1h1.3v1.3h-1.3zM235.9 858.7h1.3v1.3h-1.3zM235.9 866.3h1.3v1.3h-1.3zM235.9 873.8h1.3v1.3h-1.3zM235.9 881.4h1.3v1.3h-1.3zM235.9 888.9h1.3v1.3h-1.3zM235.9 896.5h1.3v1.3h-1.3zM235.9 904.1h1.3v1.3h-1.3zM235.9 911.6h1.3v1.3h-1.3zM235.9 919.2h1.3v1.3h-1.3zM235.9 926.7h1.3v1.3h-1.3zM235.9 934.3h1.3v1.3h-1.3zM235.9 941.9h1.3v1.3h-1.3zM235.9 949.4h1.3v1.3h-1.3zM508.9 390.0h1.3v1.3h-1.3zM508.9 397.5h1.3v1.3h-1.3zM508.9 405.1h1.3v1.3h-1.3zM508.9 412.7h1.3v1.3h-1.3zM508.9 420.2h1.3v1.3h-1.3zM508.9 427.8h1.3v1.3h-1.3zM508.9 435.3h1.3v1.3h-1.3zM508.9 442.9h1.3v1.3h-1.3zM508.9 450.5h1.3v1.3h-1.3zM508.9 458.0h1.3v1.3h-1.3zM508.9 465.6h1.3v1.3h-1.3zM508.9 473.1h1.3v1.3h-1.3zM508.9 480.7h1.3v1.3h-1.3zM508.9 488.3h1.3v1.3h-1.3zM508.9 495.8h1.3v1.3h-1.3zM508.9 503.4h1.3v1.3h-1.3zM508.9 510.9h1.3v1.3h-1.3zM508.9 518.5h1.3v1.3h-1.3zM508.9 526.1h1.3v1.3h-1.3zM508.9 533.6h1.3v1.3h-1.3zM508.9 541.2h1.3v1.3h-1.3zM508.9 548.7h1.3v1.3h-1.3zM508.9 556.3h1.3v1.3h-1.3zM508.9 563.9h1.3v1.3h-1.3zM508.9 571.4h1.3v1.3h-1.3zM508.9 579.0h1.3v1.3h-1.3zM508.9 586.5h1.3v1.3h-1.3zM508.9 594.1h1.3v1.3h-1.3zM508.9 601.7h1.3v1.3h-1.3zM508.9 609.2h1.3v1.3h-1.3zM508.9 616.8h1.3v1.3h-1.3zM508.9 624.3h1.3v1.3h-1.3zM508.9 631.9h1.3v1.3h-1.3zM508.9 639.5h1.3v1.3h-1.3zM508.9 647.0h1.3v1.3h-1.3zM508.9 654.6h1.3v1.3h-1.3zM508.9 662.1h1.3v1.3h-1.3zM508.9 669.7h1.3v1.3h-1.3zM508.9 677.3h1.3v1.3h-1.3zM508.9 684.8h1.3v1.3h-1.3zM508.9 692.4h1.3v1.3h-1.3zM508.9 699.9h1.3v1.3h-1.3zM508.9 707.5h1.3v1.3h-1.3zM508.9 715.1h1.3v1.3h-1.3zM508.9 722.6h1.3v1.3h-1.3zM508.9 730.2h1.3v1.3h-1.3zM508.9 737.7h1.3v1.3h-1.3zM508.9 745.3h1.3v1.3h-1.3zM508.9 752.9h1.3v1.3h-1.3zM508.9 760.4h1.3v1.3h-1.3zM508.9 768.0h1.3v1.3h-1.3zM508.9 775.5h1.3v1.3h-1.3zM508.9 783.1h1.3v1.3h-1.3zM508.9 790.7h1.3v1.3h-1.3zM508.9 798.2h1.3v1.3h-1.3zM508.9 805.8h1.3v1.3h-1.3zM508.9 813.3h1.3v1.3h-1.3zM508.9 820.9h1.3v1.3h-1.3zM508.9 828.5h1.3v1.3h-1.3zM508.9 836.0h1.3v1.3h-1.3zM508.9 843.6h1.3v1.3h-1.3zM508.9 851.1h1.3v1.3h-1.3zM508.9 858.7h1.3v1.3h-1.3zM508.9 866.3h1.3v1.3h-1.3zM508.9 873.8h1.3v1.3h-1.3zM508.9 881.4h1.3v1.3h-1.3zM508.9 888.9h1.3v1.3h-1.3zM508.9 896.5h1.3v1.3h-1.3zM508.9 904.1h1.3v1.3h-1.3zM508.9 911.6h1.3v1.3h-1.3zM508.9 919.2h1.3v1.3h-1.3zM508.9 926.7h1.3v1.3h-1.3zM508.9 934.3h1.3v1.3h-1.3zM508.9 941.9h1.3v1.3h-1.3zM508.9 949.4h1.3v1.3h-1.3zM768.9 390.0h1.3v1.3h-1.3zM768.9 397.5h1.3v1.3h-1.3zM768.9 405.1h1.3v1.3h-1.3zM768.9 412.7h1.3v1.3h-1.3zM768.9 420.2h1.3v1.3h-1.3zM768.9 427.8h1.3v1.3h-1.3zM768.9 435.3h1.3v1.3h-1.3zM768.9 442.9h1.3v1.3h-1.3zM768.9 450.5h1.3v1.3h-1.3zM768.9 458.0h1.3v1.3h-1.3zM768.9 465.6h1.3v1.3h-1.3zM768.9 473.1h1.3v1.3h-1.3zM768.9 480.7h1.3v1.3h-1.3zM768.9 488.3h1.3v1.3h-1.3zM768.9 495.8h1.3v1.3h-1.3zM768.9 503.4h1.3v1.3h-1.3zM768.9 510.9h1.3v1.3h-1.3zM768.9 518.5h1.3v1.3h-1.3zM768.9 526.1h1.3v1.3h-1.3zM768.9 533.6h1.3v1.3h-1.3zM768.9 541.2h1.3v1.3h-1.3zM768.9 548.7h1.3v1.3h-1.3zM768.9 556.3h1.3v1.3h-1.3zM768.9 563.9h1.3v1.3h-1.3zM768.9 571.4h1.3v1.3h-1.3zM768.9 579.0h1.3v1.3h-1.3zM768.9 586.5h1.3v1.3h-1.3zM768.9 594.1h1.3v1.3h-1.3zM768.9 601.7h1.3v1.3h-1.3zM768.9 609.2h1.3v1.3h-1.3zM768.9 616.8h1.3v1.3h-1.3zM768.9 624.3h1.3v1.3h-1.3zM768.9 631.9h1.3v1.3h-1.3zM768.9 639.5h1.3v1.3h-1.3zM768.9 647.0h1.3v1.3h-1.3zM768.9 654.6h1.3v1.3h-1.3zM768.9 662.1h1.3v1.3h-1.3zM768.9 669.7h1.3v1.3h-1.3zM768.9 677.3h1.3v1.3h-1.3zM768.9 684.8h1.3v1.3h-1.3zM768.9 692.4h1.3v1.3h-1.3zM768.9 699.9h1.3v1.3h-1.3zM768.9 707.5h1.3v1.3h-1.3zM768.9 715.1h1.3v1.3h-1.3zM768.9 722.6h1.3v1.3h-1.3zM768.9 730.2h1.3v1.3h-1.3zM768.9 737.7h1.3v1.3h-1.3zM768.9 745.3h1.3v1.3h-1.3zM768.9 752.9h1.3v1.3h-1.3zM768.9 760.4h1.3v1.3h-1.3zM768.9 768.0h1.3v1.3h-1.3zM768.9 775.5h1.3v1.3h-1.3zM768.9 783.1h1.3v1.3h-1.3zM768.9 790.7h1.3v1.3h-1.3zM768.9 798.2h1.3v1.3h-1.3zM768.9 805.8h1.3v1.3h-1.3zM768.9 813.3h1.3v1.3h-1.3zM768.9 820.9h1.3v1.3h-1.3zM768.9 828.5h1.3v1.3h-1.3zM768.9 836.0h1.3v1.3h-1.3zM768.9 843.6h1.3v1.3h-1.3zM768.9 851.1h1.3v1.3h-1.3zM768.9 858.7h1.3v1.3h-1.3zM768.9 866.3h1.3v1.3h-1.3zM768.9 873.8h1.3v1.3h-1.3zM768.9 881.4h1.3v1.3h-1.3zM768.9 888.9h1.3v1.3h-1.3zM768.9 896.5h1.3v1.3h-1.3zM768.9 904.1h1.3v1.3h-1.3zM768.9 911.6h1.3v1.3h-1.3zM768.9 919.2h1.3v1.3h-1.3zM768.9 926.7h1.3v1.3h-1.3zM768.9 934.3h1.3v1.3h-1.3zM768.9 941.9h1.3v1.3h-1.3zM768.9 949.4h1.3v1.3h-1.3zM1054.9 390.0h1.3v1.3h-1.3zM1054.9 397.5h1.3v1.3h-1.3zM1054.9 405.1h1.3v1.3h-1.3zM1054.9 412.7h1.3v1.3h-1.3zM1054.9 420.2h1.3v1.3h-1.3zM1054.9 427.8h1.3v1.3h-1.3zM1054.9 435.3h1.3v1.3h-1.3zM1054.9 442.9h1.3v1.3h-1.3zM1054.9 450.5h1.3v1.3h-1.3zM1054.9 458.0h1.3v1.3h-1.3zM1054.9 465.6h1.3v1.3h-1.3zM1054.9 473.1h1.3v1.3h-1.3zM1054.9 480.7h1.3v1.3h-1.3zM1054.9 488.3h1.3v1.3h-1.3zM1054.9 495.8h1.3v1.3h-1.3zM1054.9 503.4h1.3v1.3h-1.3zM1054.9 510.9h1.3v1.3h-1.3zM1054.9 518.5h1.3v1.3h-1.3zM1054.9 526.1h1.3v1.3h-1.3zM1054.9 533.6h1.3v1.3h-1.3zM1054.9 541.2h1.3v1.3h-1.3zM1054.9 548.7h1.3v1.3h-1.3zM1054.9 556.3h1.3v1.3h-1.3zM1054.9 563.9h1.3v1.3h-1.3zM1054.9 571.4h1.3v1.3h-1.3zM1054.9 579.0h1.3v1.3h-1.3zM1054.9 586.5h1.3v1.3h-1.3zM1054.9 594.1h1.3v1.3h-1.3zM1054.9 601.7h1.3v1.3h-1.3zM1054.9 609.2h1.3v1.3h-1.3zM1054.9 616.8h1.3v1.3h-1.3zM1054.9 624.3h1.3v1.3h-1.3zM1054.9 631.9h1.3v1.3h-1.3zM1054.9 639.5h1.3v1.3h-1.3zM1054.9 647.0h1.3v1.3h-1.3zM1054.9 654.6h1.3v1.3h-1.3zM1054.9 662.1h1.3v1.3h-1.3zM1054.9 669.7h1.3v1.3h-1.3zM1054.9 677.3h1.3v1.3h-1.3zM1054.9 684.8h1.3v1.3h-1.3zM1054.9 692.4h1.3v1.3h-1.3zM1054.9 699.9h1.3v1.3h-1.3zM1054.9 707.5h1.3v1.3h-1.3zM1054.9 715.1h1.3v1.3h-1.3zM1054.9 722.6h1.3v1.3h-1.3zM1054.9 730.2h1.3v1.3h-1.3zM1054.9 737.7h1.3v1.3h-1.3zM1054.9 745.3h1.3v1.3h-1.3zM1054.9 752.9h1.3v1.3h-1.3zM1054.9 760.4h1.3v1.3h-1.3zM1054.9 768.0h1.3v1.3h-1.3zM1054.9 775.5h1.3v1.3h-1.3zM1054.9 783.1h1.3v1.3h-1.3zM1054.9 790.7h1.3v1.3h-1.3zM1054.9 798.2h1.3v1.3h-1.3zM1054.9 805.8h1.3v1.3h-1.3zM1054.9 813.3h1.3v1.3h-1.3zM1054.9 820.9h1.3v1.3h-1.3zM1054.9 828.5h1.3v1.3h-1.3zM1054.9 836.0h1.3v1.3h-1.3zM1054.9 843.6h1.3v1.3h-1.3zM1054.9 851.1h1.3v1.3h-1.3zM1054.9 858.7h1.3v1.3h-1.3zM1054.9 866.3h1.3v1.3h-1.3zM1054.9 873.8h1.3v1.3h-1.3zM1054.9 881.4h1.3v1.3h-1.3zM1054.9 888.9h1.3v1.3h-1.3zM1054.9 896.5h1.3v1.3h-1.3zM1054.9 904.1h1.3v1.3h-1.3zM1054.9 911.6h1.3v1.3h-1.3zM1054.9 919.2h1.3v1.3h-1.3zM1054.9 926.7h1.3v1.3h-1.3zM1054.9 934.3h1.3v1.3h-1.3zM1054.9 941.9h1.3v1.3h-1.3zM1054.9 949.4h1.3v1.3h-1.3z" fill="#000" opacity="0.85"/><path d="M1186 390.6h2M10 390.6h2M1186 398.1h2M10 398.1h2M1184 405.7h4M10 405.7h4M1186 413.3h2M10 413.3h2M1186 420.8h2M10 420.8h2M1186 428.4h2M10 428.4h2M1186 435.9h2M10 435.9h2M1183 443.5h5M10 443.5h5M1186 451.1h2M10 451.1h2M1186 458.6h2M10 458.6h2M1186 466.2h2M10 466.2h2M1186 473.7h2M10 473.7h2M1184 481.3h4M10 481.3h4M1186 488.9h2M10 488.9h2M1186 496.4h2M10 496.4h2M1186 504.0h2M10 504.0h2M1186 511.5h2M10 511.5h2M1183 519.1h5M10 519.1h5M1186 526.7h2M10 526.7h2M1186 534.2h2M10 534.2h2M1186 541.8h2M10 541.8h2M1186 549.3h2M10 549.3h2M1184 556.9h4M10 556.9h4M1186 564.5h2M10 564.5h2M1186 572.0h2M10 572.0h2M1186 579.6h2M10 579.6h2M1186 587.1h2M10 587.1h2M1183 594.7h5M10 594.7h5M1186 602.3h2M10 602.3h2M1186 609.8h2M10 609.8h2M1186 617.4h2M10 617.4h2M1186 624.9h2M10 624.9h2M1184 632.5h4M10 632.5h4M1186 640.1h2M10 640.1h2M1186 647.6h2M10 647.6h2M1186 655.2h2M10 655.2h2M1186 662.7h2M10 662.7h2M1183 670.3h5M10 670.3h5M1186 677.9h2M10 677.9h2M1186 685.4h2M10 685.4h2M1186 693.0h2M10 693.0h2M1186 700.5h2M10 700.5h2M1184 708.1h4M10 708.1h4M1186 715.7h2M10 715.7h2M1186 723.2h2M10 723.2h2M1186 730.8h2M10 730.8h2M1186 738.3h2M10 738.3h2M1183 745.9h5M10 745.9h5M1186 753.5h2M10 753.5h2M1186 761.0h2M10 761.0h2M1186 768.6h2M10 768.6h2M1186 776.1h2M10 776.1h2M1184 783.7h4M10 783.7h4M1186 791.3h2M10 791.3h2M1186 798.8h2M10 798.8h2M1186 806.4h2M10 806.4h2M1186 813.9h2M10 813.9h2M1183 821.5h5M1186 829.1h2M1186 836.6h2M1186 844.2h2M1186 851.7h2M1184 859.3h4M1186 866.9h2M1186 874.4h2M1186 882.0h2M1186 889.5h2M1183 897.1h5M1186 904.7h2M1186 912.2h2M1186 919.8h2M1186 927.3h2M1184 934.9h4M1186 942.5h2M1186 950.0h2" stroke="#000" stroke-width="1.3" fill="none"/><rect x="1187.6" y="388" width="1.4" height="568" fill="#000"/><text x="1219.12 1226.97 1234.82 1242.67 1250.52 1258.37" y="446.50" text-anchor="middle" font-size="12.5" fill="#111" font-weight="normal" >650.00</text><text x="1219.12 1226.97 1234.82 1242.67 1250.52 1258.37" y="522.10" text-anchor="middle" font-size="12.5" fill="#111" font-weight="normal" >600.00</text><text x="1219.12 1226.97 1234.82 1242.67 1250.52 1258.37" y="597.70" text-anchor="middle" font-size="12.5" fill="#111" font-weight="normal" >550.00</text><text x="1219.12 1226.97 1234.82 1242.67 1250.52 1258.37" y="673.30" text-anchor="middle" font-size="12.5" fill="#111" font-weight="normal" >500.00</text><text x="1219.12 1226.97 1234.82 1242.67 1250.52 1258.37" y="748.90" text-anchor="middle" font-size="12.5" fill="#111" font-weight="normal" >450.00</text><text x="1219.12 1226.97 1234.82 1242.67 1250.52 1258.37" y="900.10" text-anchor="middle" font-size="12.5" fill="#111" font-weight="normal" >350.00</text><rect x="10.5" y="955.5" width="1166.5" height="3" fill="#fff" stroke="#000" stroke-width="1"/><rect x="10" y="955" width="349" height="3" fill="#10d010"/><rect x="879" y="955" width="298.5" height="4" fill="#000"/><rect x="10" y="958" width="349" height="1" fill="#000"/><text x="21.15 28.85" y="969.80" text-anchor="middle" font-size="11.7" fill="#111" font-weight="normal" >07</text><text x="86.15 93.85" y="969.80" text-anchor="middle" font-size="11.7" fill="#111" font-weight="normal" >14</text><text x="138.15 145.85" y="969.80" text-anchor="middle" font-size="11.7" fill="#111" font-weight="normal" >21</text><text x="203.15 210.85" y="969.80" text-anchor="middle" font-size="11.7" fill="#111" font-weight="normal" >28</text><text x="242.15 249.85" y="969.80" text-anchor="middle" font-size="11.7" fill="#111" font-weight="normal" >01</text><text x="268.15 275.85" y="969.80" text-anchor="middle" font-size="11.7" fill="#111" font-weight="normal" >05</text><text x="333.15 340.85" y="969.80" text-anchor="middle" font-size="11.7" fill="#111" font-weight="normal" >12</text><text x="398.15 405.85" y="969.80" text-anchor="middle" font-size="11.7" fill="#111" font-weight="normal" >19</text><text x="463.15 470.85" y="969.80" text-anchor="middle" font-size="11.7" fill="#111" font-weight="normal" >27</text><text x="515.15 522.85" y="969.80" text-anchor="middle" font-size="11.7" fill="#111" font-weight="normal" >02</text><text x="580.15 587.85" y="969.80" text-anchor="middle" font-size="11.7" fill="#111" font-weight="normal" >09</text><text x="645.15 652.85" y="969.80" text-anchor="middle" font-size="11.7" fill="#111" font-weight="normal" >16</text><text x="697.15 704.85" y="969.80" text-anchor="middle" font-size="11.7" fill="#111" font-weight="normal" >23</text><text x="775.15 782.85" y="969.80" text-anchor="middle" font-size="11.7" fill="#111" font-weight="normal" >01</text><text x="814.15 821.85" y="969.80" text-anchor="middle" font-size="11.7" fill="#111" font-weight="normal" >07</text><text x="879.15 886.85" y="969.80" text-anchor="middle" font-size="11.7" fill="#111" font-weight="normal" >14</text><text x="944.15 951.85" y="969.80" text-anchor="middle" font-size="11.7" fill="#111" font-weight="normal" >21</text><text x="1009.15 1016.85" y="969.80" text-anchor="middle" font-size="11.7" fill="#111" font-weight="normal" >28</text><text x="1061.15 1068.85" y="969.80" text-anchor="middle" font-size="11.7" fill="#111" font-weight="normal" >01</text><text x="1139.15 1146.85" y="969.80" text-anchor="middle" font-size="11.7" fill="#111" font-weight="normal" >11</text><path d="M15.5 959v13M80.5 959v13M132.5 959v13M197.5 959v13M236.5 959v13M262.5 959v13M327.5 959v13M392.5 959v13M457.5 959v13M509.5 959v13M574.5 959v13M639.5 959v13M691.5 959v13M769.5 959v13M808.5 959v13M873.5 959v13M938.5 959v13M1003.5 959v13M1055.5 959v13M1133.5 959v13" stroke="#000" stroke-width="1.3"/><text x="241.95 249.65 257.35" y="952.60" text-anchor="middle" font-size="11.7" fill="#222" font-weight="normal" >May</text><text x="514.95 522.65 530.35" y="952.60" text-anchor="middle" font-size="11.7" fill="#222" font-weight="normal" >Jun</text><text x="774.95 782.65 790.35" y="952.60" text-anchor="middle" font-size="11.7" fill="#222" font-weight="normal" >Jul</text><text x="1060.95 1068.65 1076.35" y="952.60" text-anchor="middle" font-size="11.7" fill="#222" font-weight="normal" >Aug</text><polyline points="93.5,403.2 106.5,400.7 119.5,409.2 132.5,422.0 145.5,422.8 158.5,440.7 171.5,448.0 184.5,455.8 197.5,477.4 210.5,464.0 223.5,458.7 236.5,460.9 249.5,449.8 262.5,448.0 275.5,437.6 288.5,432.7 301.5,454.6 314.5,449.9 327.5,468.8 340.5,468.0 353.5,529.9 366.5,546.8 379.5,576.9 392.5,585.8 405.5,587.9 418.5,563.0 431.5,553.1 444.5,537.8 457.5,532.7 470.5,512.9 483.5,528.0 496.5,528.0 509.5,529.9 522.5,504.8 535.5,522.7 548.5,506.8 561.5,511.5 574.5,502.9 587.5,511.5 600.5,493.0 613.5,499.7 626.5,506.8 639.5,482.4 652.5,458.0 665.5,452.0 678.5,410.7 691.5,426.5 704.5,472.0 717.5,462.0 730.5,484.1 743.5,533.7 756.5,547.1 769.5,587.8 782.5,582.9 795.5,596.0 808.5,568.8 821.5,578.9 834.5,562.6 847.5,561.8 860.5,594.3 873.5,528.5 886.5,518.7 899.5,671.0 912.5,627.0 925.5,601.0 938.5,615.0 951.5,629.0 964.5,578.7 977.5,582.7 990.5,608.9 1003.5,619.5 1016.5,637.9 1029.5,663.5 1042.5,674.4 1055.5,686.8 1068.5,699.0 1081.5,694.0 1094.5,697.0 1107.5,691.7 1120.5,699.0 1133.5,695.6 1146.5,708.9 1159.5,706.9" fill="none" stroke="#1878b0" stroke-width="2.3" stroke-linejoin="miter" stroke-miterlimit="3"/><polyline points="158.5,864.0 171.5,855.9 184.5,848.8 197.5,850.7 210.5,840.6 223.5,835.9 236.5,835.9 249.5,854.8 262.5,861.7 275.5,863.8 288.5,858.0 301.5,869.3 314.5,854.3 327.5,860.6 340.5,843.8 353.5,848.5 366.5,830.7 379.5,826.0 392.5,821.7 405.5,836.7 418.5,830.1 431.5,824.9 444.5,824.9 457.5,813.9 470.5,808.6 483.5,801.6 496.5,813.3 509.5,800.0 522.5,798.3 535.5,793.9 548.5,779.7 561.5,779.7 574.5,774.1 587.5,780.5 600.5,786.9 613.5,777.0 626.5,766.9 639.5,777.6 652.5,782.8 665.5,763.6 678.5,788.9 691.5,827.4 704.5,832.1 717.5,840.8 730.5,844.9 743.5,843.7 756.5,843.7 769.5,863.8 782.5,883.8 795.5,892.9 808.5,907.1 821.5,918.9 834.5,918.9 847.5,898.0 860.5,907.1 873.5,898.0 886.5,873.9 899.5,879.0 912.5,894.2 925.5,886.6 938.5,909.9 951.5,915.3 964.5,921.0 977.5,920.0 990.5,920.0 1003.5,924.0 1016.5,918.6 1029.5,925.7 1042.5,920.9 1055.5,933.8 1068.5,935.7 1081.5,934.6 1094.5,942.0 1107.5,935.7 1120.5,934.6 1133.5,938.8 1146.5,939.3 1159.5,941.2" fill="none" stroke="#c08a98" stroke-width="2.5" stroke-linejoin="miter" stroke-miterlimit="3"/><polyline points="158.5,853.8 171.5,850.0 184.5,841.7 197.5,842.8 210.5,837.0 223.5,832.3 236.5,826.8 249.5,828.0 262.5,821.7 275.5,823.9 288.5,831.8 301.5,828.0 314.5,829.6 327.5,829.9 340.5,836.7 353.5,838.0 366.5,817.8 379.5,823.3 392.5,829.1 405.5,817.8 418.5,816.5 431.5,813.4 444.5,808.6 457.5,813.7 470.5,812.8 483.5,821.7 496.5,830.7 509.5,830.7 522.5,834.8 535.5,850.8 548.5,845.8 561.5,854.5 574.5,858.4 587.5,854.8 600.5,871.0 613.5,855.7 626.5,858.0 639.5,877.8 652.5,879.7 665.5,888.3 678.5,892.0 691.5,890.7 704.5,886.3 717.5,885.7 730.5,897.1 743.5,894.2 756.5,894.2 769.5,904.7 782.5,896.9 795.5,916.2 808.5,907.9 821.5,907.1 834.5,895.0 847.5,903.6 860.5,912.6 873.5,925.7 886.5,917.8 899.5,926.4 912.5,909.4 925.5,902.7 938.5,901.6 951.5,894.8 964.5,889.0 977.5,885.8 990.5,894.2 1003.5,882.7 1016.5,879.7 1029.5,878.6 1042.5,871.2 1055.5,863.8 1068.5,875.0 1081.5,871.6 1094.5,866.9 1107.5,865.9 1120.5,865.6 1133.5,864.8 1146.5,867.5 1159.5,886.1" fill="none" stroke="#780a0a" stroke-width="2.5" stroke-linejoin="miter" stroke-miterlimit="3"/><polyline points="15.5,734.5 28.5,729.8 41.5,734.9 54.5,731.1 67.5,729.8 80.5,721.7 93.5,719.8 106.5,718.8 119.5,718.8 132.5,719.8 145.5,723.9 158.5,730.0 171.5,727.9 184.5,727.7 197.5,732.7 210.5,724.8 223.5,721.6 236.5,720.4 249.5,721.4 262.5,718.7 275.5,718.5 288.5,714.3 301.5,723.0 314.5,721.5 327.5,729.0 340.5,721.7 353.5,737.9 366.5,733.8 379.5,737.9 392.5,742.3 405.5,745.4 418.5,733.5 431.5,730.0 444.5,724.0 457.5,720.9 470.5,713.7 483.5,720.0 496.5,727.8 509.5,726.5 522.5,721.7 535.5,730.6 548.5,723.0 561.5,727.2 574.5,718.7 587.5,723.8 600.5,722.5 613.5,719.6 626.5,717.7 639.5,717.5 652.5,716.4 665.5,714.6 678.5,709.5 691.5,726.5 704.5,739.7 717.5,740.2 730.5,753.9 743.5,765.8 756.5,770.2 769.5,794.2 782.5,797.3 795.5,805.5 808.5,799.4 821.5,802.0 834.5,800.5 847.5,795.4 860.5,806.9 873.5,790.2 886.5,782.7 899.5,828.0 912.5,815.4 925.5,803.7 938.5,814.6 951.5,818.8 964.5,802.6 977.5,801.8 990.5,809.8 1003.5,810.0 1016.5,816.9 1029.5,823.8 1042.5,826.0 1055.5,833.4 1068.5,840.1 1081.5,836.0 1094.5,834.9 1107.5,832.8 1120.5,836.9 1133.5,838.8 1146.5,843.2 1159.5,845.1" fill="none" stroke="#e21ee6" stroke-width="2.2" stroke-linejoin="miter" stroke-miterlimit="3"/><polyline points="15.5,770.2 28.5,767.6 41.5,773.9 54.5,769.8 67.5,777.7 80.5,767.6 93.5,773.6 106.5,774.6 119.5,775.8 132.5,780.9 145.5,770.8 158.5,760.5 171.5,756.6 184.5,763.8 197.5,759.4 210.5,760.7 223.5,761.9 236.5,761.9 249.5,755.9 262.5,743.0 275.5,748.7 288.5,734.9 301.5,739.7 314.5,752.3 327.5,756.1 340.5,736.9 353.5,732.8 366.5,740.4 379.5,726.5 392.5,734.1 405.5,741.4 418.5,729.3 431.5,733.5 444.5,727.5 457.5,724.6 470.5,723.8 483.5,726.5 496.5,737.2 509.5,747.9 522.5,752.0 535.5,755.5 548.5,756.5 561.5,761.5 574.5,742.7 587.5,747.8 600.5,742.6 613.5,746.9 626.5,738.1 639.5,732.8 652.5,745.4 665.5,755.2 678.5,745.7 691.5,761.2 704.5,768.7 717.5,770.5 730.5,782.8 743.5,790.4 756.5,799.8 769.5,826.2 782.5,823.7 795.5,819.0 808.5,815.7 821.5,805.1 834.5,828.1 847.5,820.5 860.5,816.3 873.5,810.6 886.5,822.2 899.5,835.8 912.5,828.0 925.5,824.9 938.5,834.8 951.5,835.8 964.5,821.0 977.5,817.8 990.5,815.4 1003.5,812.8 1016.5,829.8 1029.5,827.1 1042.5,838.9 1055.5,848.0 1068.5,849.1 1081.5,842.0 1094.5,835.7 1107.5,838.8 1120.5,847.0 1133.5,853.0 1146.5,856.9 1159.5,847.0" fill="none" stroke="#000" stroke-width="2.1" stroke-linejoin="miter" stroke-miterlimit="3"/><path d="M14.2 719.0H16.8V739.3H14.2zM11.1 736.1h3.2v2.6h-3.2zM16.7 722.9h4.0v2.6h-4.0zM27.2 716.6H29.8V727.3H27.2zM24.1 722.9h3.2v2.6h-3.2zM29.7 716.3h4.0v2.6h-4.0zM40.2 707.2H42.8V722.3H40.2zM37.1 717.8h3.2v2.6h-3.2zM42.7 709.0h4.0v2.6h-4.0zM53.2 694.6H55.8V712.2H53.2zM50.1 709.6h3.2v2.6h-3.2zM55.7 695.1h4.0v2.6h-4.0zM66.2 684.5H68.8V698.3H66.2zM63.1 695.8h3.2v2.6h-3.2zM68.7 684.4h4.0v2.6h-4.0zM79.2 685.7H81.8V694.0H79.2zM76.1 685.7h3.2v2.6h-3.2zM81.7 692.0h4.0v2.6h-4.0zM92.2 687.6H94.8V702.1H92.2zM89.1 692.0h3.2v2.6h-3.2zM94.7 698.3h4.0v2.6h-4.0zM105.2 690.2H107.8V702.1H105.2zM102.1 698.3h3.2v2.6h-3.2zM107.7 692.7h4.0v2.6h-4.0zM118.2 691.4H120.8V698.3H118.2zM115.1 694.5h3.2v2.6h-3.2zM120.7 695.1h4.0v2.6h-4.0zM131.2 688.9H133.8V699.6H131.2zM128.1 694.5h3.2v2.6h-3.2zM133.7 696.7h4.0v2.6h-4.0zM144.2 696.4H146.8V708.4H144.2zM141.1 696.7h3.2v2.6h-3.2zM146.7 705.9h4.0v2.6h-4.0zM157.2 705.3H159.8V715.3H157.2zM154.1 705.2h3.2v2.6h-3.2zM159.7 712.1h4.0v2.6h-4.0zM170.2 703.4H172.8V713.4H170.2zM167.1 710.9h3.2v2.6h-3.2zM172.7 704.0h4.0v2.6h-4.0zM183.2 699.2H185.8V706.5H183.2zM180.1 704.0h3.2v2.6h-3.2zM185.7 700.8h4.0v2.6h-4.0zM196.2 702.1H198.8V716.6H196.2zM193.1 705.2h3.2v2.6h-3.2zM198.7 705.2h4.0v2.6h-4.0zM209.2 705.9H211.8V731.7H209.2zM206.1 705.2h3.2v2.6h-3.2zM211.7 729.2h4.0v2.6h-4.0zM222.2 716.0H224.8V730.5H222.2zM219.1 727.9h3.2v2.6h-3.2zM224.7 719.1h4.0v2.6h-4.0zM235.2 712.2H237.8V725.4H235.2zM232.1 719.1h3.2v2.6h-3.2zM237.7 722.9h4.0v2.6h-4.0zM248.2 718.5H250.8V729.8H248.2zM245.1 722.2h3.2v2.6h-3.2zM250.7 727.9h4.0v2.6h-4.0zM261.2 728.6H263.8V751.9H261.2zM258.1 727.9h3.2v2.6h-3.2zM263.7 749.9h4.0v2.6h-4.0zM274.2 745.6H276.8V753.1H274.2zM271.1 747.4h3.2v2.6h-3.2zM276.7 748.0h4.0v2.6h-4.0zM287.2 741.2H289.8V761.3H287.2zM284.1 744.3h3.2v2.6h-3.2zM289.7 758.7h4.0v2.6h-4.0zM300.2 759.3H302.8V770.6H300.2zM297.1 758.6h3.2v2.6h-3.2zM302.7 761.7h4.0v2.6h-4.0zM313.2 754.9H315.8V762.4H313.2zM310.1 759.2h3.2v2.6h-3.2zM315.7 757.3h4.0v2.6h-4.0zM326.2 750.5H328.8V763.0H326.2zM323.1 754.2h3.2v2.6h-3.2zM328.7 759.9h4.0v2.6h-4.0zM339.2 766.2H341.8V775.6H339.2zM336.1 769.9h3.2v2.6h-3.2zM341.7 766.2h4.0v2.6h-4.0zM352.2 759.9H354.8V766.2H352.2zM349.1 759.9h3.2v2.6h-3.2zM354.7 761.7h4.0v2.6h-4.0zM365.2 745.4H367.8V756.1H365.2zM362.1 752.9h3.2v2.6h-3.2zM367.7 746.6h4.0v2.6h-4.0zM378.2 744.2H380.8V757.4H378.2zM375.1 745.4h3.2v2.6h-3.2zM380.7 754.8h4.0v2.6h-4.0zM391.2 746.0H393.8V757.4H391.2zM388.1 754.8h3.2v2.6h-3.2zM393.7 749.2h4.0v2.6h-4.0zM404.2 738.5H406.8V754.2H404.2zM401.1 749.8h3.2v2.6h-3.2zM406.7 738.4h4.0v2.6h-4.0zM417.2 728.4H419.8V741.0H417.2zM414.1 737.8h3.2v2.6h-3.2zM419.7 728.4h4.0v2.6h-4.0zM430.2 724.6H432.8V736.6H430.2zM427.1 731.5h3.2v2.6h-3.2zM432.7 725.2h4.0v2.6h-4.0zM443.2 724.6H445.8V738.5H443.2zM440.1 725.2h3.2v2.6h-3.2zM445.7 731.5h4.0v2.6h-4.0zM456.2 726.5H458.8V737.2H456.2zM453.1 730.9h3.2v2.6h-3.2zM458.7 730.9h4.0v2.6h-4.0zM469.2 726.5H471.8V746.0H469.2zM466.1 730.9h3.2v2.6h-3.2zM471.7 742.9h4.0v2.6h-4.0zM482.2 741.0H484.8V756.1H482.2zM479.1 741.0h3.2v2.6h-3.2zM484.7 749.2h4.0v2.6h-4.0zM495.2 746.7H497.8V757.4H495.2zM492.1 748.5h3.2v2.6h-3.2zM497.7 753.6h4.0v2.6h-4.0zM508.2 744.2H510.8V765.6H508.2zM505.1 753.6h3.2v2.6h-3.2zM510.7 763.0h4.0v2.6h-4.0zM521.2 757.4H523.8V770.6H521.2zM518.1 761.7h3.2v2.6h-3.2zM523.7 761.7h4.0v2.6h-4.0zM534.2 752.3H536.8V765.6H534.2zM531.1 761.7h3.2v2.6h-3.2zM536.7 761.7h4.0v2.6h-4.0zM547.2 756.8H549.8V771.2H547.2zM544.1 760.5h3.2v2.6h-3.2zM549.7 761.1h4.0v2.6h-4.0zM560.2 753.0H562.8V769.3H560.2zM557.1 763.0h3.2v2.6h-3.2zM562.7 756.1h4.0v2.6h-4.0zM573.2 752.3H575.8V771.9H573.2zM570.1 756.7h3.2v2.6h-3.2zM575.7 769.3h4.0v2.6h-4.0zM586.2 762.4H588.8V776.9H586.2zM583.1 769.9h3.2v2.6h-3.2zM588.7 761.7h4.0v2.6h-4.0zM599.2 754.2H601.8V766.8H599.2zM596.1 761.1h3.2v2.6h-3.2zM601.7 764.9h4.0v2.6h-4.0zM612.2 758.6H614.8V768.1H612.2zM609.1 764.3h3.2v2.6h-3.2zM614.7 761.7h4.0v2.6h-4.0zM625.2 753.6H627.8V769.3H625.2zM622.1 763.0h3.2v2.6h-3.2zM627.7 752.9h4.0v2.6h-4.0zM638.2 751.7H640.8V773.8H638.2zM635.1 752.9h3.2v2.6h-3.2zM640.7 768.0h4.0v2.6h-4.0zM651.2 765.6H653.8V776.9H651.2zM648.1 767.4h3.2v2.6h-3.2zM653.7 772.5h4.0v2.6h-4.0zM664.2 768.7H666.8V776.3H664.2zM661.1 771.8h3.2v2.6h-3.2zM666.7 769.9h4.0v2.6h-4.0zM677.2 770.0H679.8V778.8H677.2zM674.1 770.6h3.2v2.6h-3.2zM679.7 776.9h4.0v2.6h-4.0zM690.2 775.0H692.8V795.8H690.2zM687.1 775.0h3.2v2.6h-3.2zM692.7 791.3h4.0v2.6h-4.0zM703.2 788.9H705.8V798.9H703.2zM700.1 792.0h3.2v2.6h-3.2zM705.7 795.8h4.0v2.6h-4.0zM716.2 795.3H718.8V810.0H716.2zM713.1 796.5h3.2v2.6h-3.2zM718.7 804.7h4.0v2.6h-4.0zM729.2 800.5H731.8V809.9H729.2zM726.1 804.2h3.2v2.6h-3.2zM731.7 805.5h4.0v2.6h-4.0zM742.2 791.6H744.8V808.0H742.2zM739.1 806.1h3.2v2.6h-3.2zM744.7 791.6h4.0v2.6h-4.0zM755.2 787.2H757.8V799.2H755.2zM752.1 794.7h3.2v2.6h-3.2zM757.7 789.7h4.0v2.6h-4.0zM768.2 787.9H770.8V800.5H768.2zM765.1 789.1h3.2v2.6h-3.2zM770.7 790.3h4.0v2.6h-4.0zM781.2 776.5H783.8V798.6H781.2zM778.1 791.0h3.2v2.6h-3.2zM783.7 775.9h4.0v2.6h-4.0zM794.2 768.3H796.8V777.8H794.2zM791.1 775.9h3.2v2.6h-3.2zM796.7 772.7h4.0v2.6h-4.0zM807.2 780.9H809.8V795.4H807.2zM804.1 780.9h3.2v2.6h-3.2zM809.7 792.9h4.0v2.6h-4.0zM820.2 790.4H822.8V806.1H820.2zM817.1 789.7h3.2v2.6h-3.2zM822.7 803.6h4.0v2.6h-4.0zM833.2 797.3H835.8V806.8H833.2zM830.1 796.6h3.2v2.6h-3.2zM835.7 801.7h4.0v2.6h-4.0zM846.2 801.7H848.8V812.4H846.2zM843.1 801.0h3.2v2.6h-3.2zM848.7 809.9h4.0v2.6h-4.0zM859.2 807.7H861.8V822.1H859.2zM856.1 809.8h3.2v2.6h-3.2zM861.7 815.4h4.0v2.6h-4.0zM872.2 801.1H874.8V824.9H872.2zM869.1 803.2h3.2v2.6h-3.2zM874.7 801.1h4.0v2.6h-4.0zM885.2 812.1H887.8V829.8H885.2zM882.1 821.0h3.2v2.6h-3.2zM887.7 819.2h4.0v2.6h-4.0zM898.2 811.3H900.8V823.7H898.2zM895.1 821.1h3.2v2.6h-3.2zM900.7 812.3h7.5v2.6h-7.5z" fill="#000"/><text x="1139.75 1147.25 1154.75" y="698.80" text-anchor="middle" font-size="11.5" fill="#1878b0" font-weight="normal" >Two</text><text x="1108.71 1116.37 1124.03 1131.69 1139.35 1147.01 1154.67" y="837.20" text-anchor="middle" font-size="11.5" fill="#e21ee6" font-weight="normal" >Average</text><text x="1139.75 1147.25 1154.75" y="838.60" text-anchor="middle" font-size="11.5" fill="#1a1040" font-weight="normal" >One</text><text x="1124.03 1131.69 1139.35 1147.01 1154.67" y="877.90" text-anchor="middle" font-size="11.5" fill="#780a0a" font-weight="normal" >Seven</text><text x="1131.69 1139.35 1147.01 1154.67" y="932.50" text-anchor="middle" font-size="11.5" fill="#c08a98" font-weight="normal" >Nine</text><rect x="1189.2" y="813" width="74.6" height="14.8" fill="#f010f0"/><text x="1219.54 1227.26 1234.98 1242.70 1250.42 1258.14" y="824.20" text-anchor="middle" font-size="11.5" fill="#fff" font-weight="normal" >400.50</text><rect x="1189.2" y="805.3" width="74.6" height="13.7" fill="#000"/><text x="1219.54 1227.26 1234.98 1242.70 1250.42 1258.14" y="816.00" text-anchor="middle" font-size="11.5" fill="#fff" font-weight="normal" >405.50</text><path d="M1246 964.2 L1253.6 957 L1253.6 961 L1262 961 L1262 967.2 L1253.6 967.2 L1253.6 971.4 Z" fill="#f00000"/><rect x="1176" y="954.5" width="13" height="1.2" fill="#000"/><rect x="10" y="388.5" width="80" height="64" fill="#fff"/><text x="14.86 22.58" y="398.00" text-anchor="middle" font-size="12" fill="#111" font-weight="normal" >0=</text><text x="40.34 48.06 55.78 63.50 71.22 78.94" y="398.00" text-anchor="middle" font-size="12" fill="#111" font-weight="normal" >400.00</text><text x="14.86 22.58" y="411.00" text-anchor="middle" font-size="12" fill="#111" font-weight="normal" >H=</text><text x="40.34 48.06 55.78 63.50 71.22 78.94" y="411.00" text-anchor="middle" font-size="12" fill="#111" font-weight="normal" >406.75</text><text x="14.86 22.58" y="424.00" text-anchor="middle" font-size="12" fill="#111" font-weight="normal" >L=</text><text x="40.34 48.06 55.78 63.50 71.22 78.94" y="424.00" text-anchor="middle" font-size="12" fill="#111" font-weight="normal" >400.00</text><text x="14.86 22.58" y="437.00" text-anchor="middle" font-size="12" fill="#111" font-weight="normal" >L=</text><text x="40.34 48.06 55.78 63.50 71.22 78.94" y="437.00" text-anchor="middle" font-size="12" fill="#111" font-weight="normal" >405.50</text><text x="87.50" y="437.00" text-anchor="middle" font-size="10" fill="#333" font-weight="normal" >^</text><text x="14.86 22.58" y="450.00" text-anchor="middle" font-size="12" fill="#111" font-weight="normal" >Δ=</text><text x="48.06 55.78 63.50 71.22 78.94" y="450.00" text-anchor="middle" font-size="12" fill="#111" font-weight="normal" >+4.25</text><rect x="91.8" y="390.3" width="4.9" height="60" fill="#22dd22" stroke="#000" stroke-width="1"/><rect x="92.3" y="390.8" width="3.9" height="9.5" fill="#e01010"/><path d="M92.3 446 L96.2 449.6 L92.3 449.6Z" fill="#e8e020"/><rect x="10.3" y="822.3" width="146.3" height="133.5" fill="#fff" stroke="#777" stroke-width="1"/><text x="14.90 22.70 38.30 46.10 53.90 69.50 77.30" y="833.70" text-anchor="middle" font-size="12" fill="#111" font-weight="normal" >16Jul25</text><text x="14.90 22.70" y="846.60" text-anchor="middle" font-size="12" fill="#111" font-weight="normal" >0=</text><text x="112.14 119.86 127.58 135.30 143.02 150.74" y="846.60" text-anchor="middle" font-size="12" fill="#111" font-weight="normal" >400.00</text><text x="14.90 22.70" y="859.50" text-anchor="middle" font-size="12" fill="#111" font-weight="normal" >H=</text><text x="112.14 119.86 127.58 135.30 143.02 150.74" y="859.50" text-anchor="middle" font-size="12" fill="#111" font-weight="normal" >406.75</text><text x="14.90 22.70" y="872.40" text-anchor="middle" font-size="12" fill="#111" font-weight="normal" >L=</text><text x="112.14 119.86 127.58 135.30 143.02 150.74" y="872.40" text-anchor="middle" font-size="12" fill="#111" font-weight="normal" >400.00</text><text x="14.90 22.70" y="885.30" text-anchor="middle" font-size="12" fill="#111" font-weight="normal" >C=</text><text x="112.14 119.86 127.58 135.30 143.02 150.74" y="885.30" text-anchor="middle" font-size="12" fill="#111" font-weight="normal" >405.50</text><text x="14.90 22.70 30.50 38.30" y="898.20" text-anchor="middle" font-size="12" fill="#111" font-weight="normal" >0ne=</text><text x="96.70 104.42 112.14 119.86 127.58 135.30 143.02 150.74" y="898.20" text-anchor="middle" font-size="12" fill="#111" font-weight="normal" >390.5000</text><text x="14.90 22.70 30.50 38.30" y="911.10" text-anchor="middle" font-size="12" fill="#111" font-weight="normal" >Two=</text><text x="96.70 104.42 112.14 119.86 127.58 135.30 143.02 150.74" y="911.10" text-anchor="middle" font-size="12" fill="#111" font-weight="normal" >499.2500</text><text x="14.90 22.70 30.50 38.30 46.10 53.90" y="924.00" text-anchor="middle" font-size="12" fill="#111" font-weight="normal" >Seven=</text><text x="96.70 104.42 112.14 119.86 127.58 135.30 143.02 150.74" y="924.00" text-anchor="middle" font-size="12" fill="#111" font-weight="normal" >330.2500</text><text x="14.90 22.70 30.50 38.30 46.10" y="936.90" text-anchor="middle" font-size="12" fill="#111" font-weight="normal" >Nine=</text><text x="96.70 104.42 112.14 119.86 127.58 135.30 143.02 150.74" y="936.90" text-anchor="middle" font-size="12" fill="#111" font-weight="normal" >362.2500</text><text x="14.90 22.70 30.50 38.30 46.10 53.90 61.70 69.50" y="949.80" text-anchor="middle" font-size="12" fill="#111" font-weight="normal" >Average=</text><text x="96.70 104.42 112.14 119.86 127.58 135.30 143.02 150.74" y="949.80" text-anchor="middle" font-size="12" fill="#111" font-weight="normal" >395.5625</text><rect x="10" y="954" width="12.5" height="19.5" fill="#fff" stroke="#555" stroke-width="1.2"/></svg>
<svg class="abs" style="left:0;top:0" width="1274" height="984" font-family="Liberation Sans, sans-serif"><text x="99.11 107.81 116.51 125.21 133.91 142.61 156.53 170.45 179.15 187.85 196.55 205.25" y="78.10" text-anchor="middle" font-size="14.2" fill="#5c5c5c" font-weight="normal" >424.25Δ+4.50</text><text x="247.25 255.15 263.05 270.95 278.85 286.75" y="104.90" text-anchor="middle" font-size="14.6" fill="#1c1c1c" font-weight="normal" >73.514</text><text x="247.25 255.15 263.05 270.95 278.85 286.75" y="123.90" text-anchor="middle" font-size="14.6" fill="#2a8f8f" font-weight="normal" >65.457</text><text x="247.25 255.15 263.05 270.95 278.85 286.75" y="142.90" text-anchor="middle" font-size="14.6" fill="#2a8f8f" font-weight="normal" >69.421</text><text x="247.25 255.15 263.05 270.95 278.85 286.75" y="161.90" text-anchor="middle" font-size="14.6" fill="#2a8f8f" font-weight="normal" >51.598</text><text x="239.35 247.25 255.15 263.05 270.95 278.85 286.75" y="180.90" text-anchor="middle" font-size="14.6" fill="#2ea52e" font-weight="normal" >-11.615</text><text x="247.25 255.15 263.05 270.95 278.85 286.75" y="199.90" text-anchor="middle" font-size="14.6" fill="#7272cc" font-weight="normal" >16.694</text><text x="247.25 255.15 263.05 270.95 278.85 286.75" y="218.90" text-anchor="middle" font-size="14.6" fill="#7e2420" font-weight="normal" >55.582</text><text x="239.35 247.25 255.15 263.05 270.95 278.85 286.75" y="237.90" text-anchor="middle" font-size="14.6" fill="#c42424" font-weight="normal" >-17.215</text><text x="247.25 255.15 263.05 270.95 278.85 286.75" y="256.90" text-anchor="middle" font-size="14.6" fill="#806c7a" font-weight="normal" >81.329</text><text x="239.35 247.25 255.15 263.05 270.95 278.85 286.75" y="275.90" text-anchor="middle" font-size="14.6" fill="#9e6a48" font-weight="normal" >-67.610</text><text x="410.11 418.81 427.51 436.21 444.91 453.61 467.53 481.45 490.15 498.85 507.55 516.25" y="78.10" text-anchor="middle" font-size="14.2" fill="#5c5c5c" font-weight="normal" >424.25Δ+4.50</text><text x="558.25 566.15 574.05 581.95 589.85 597.75" y="104.90" text-anchor="middle" font-size="14.6" fill="#1c1c1c" font-weight="normal" >84.615</text><text x="558.25 566.15 574.05 581.95 589.85 597.75" y="123.90" text-anchor="middle" font-size="14.6" fill="#3b8cc7" font-weight="normal" >16.687</text><text x="558.25 566.15 574.05 581.95 589.85 597.75" y="142.90" text-anchor="middle" font-size="14.6" fill="#2a8f8f" font-weight="normal" >84.454</text><text x="558.25 566.15 574.05 581.95 589.85 597.75" y="161.90" text-anchor="middle" font-size="14.6" fill="#7272cc" font-weight="normal" >51.218</text><text x="550.35 558.25 566.15 574.05 581.95 589.85 597.75" y="180.90" text-anchor="middle" font-size="14.6" fill="#2ea52e" font-weight="normal" >-50.504</text><text x="550.35 558.25 566.15 574.05 581.95 589.85 597.75" y="199.90" text-anchor="middle" font-size="14.6" fill="#7272cc" font-weight="normal" >-52.298</text><text x="558.25 566.15 574.05 581.95 589.85 597.75" y="218.90" text-anchor="middle" font-size="14.6" fill="#7e2420" font-weight="normal" >83.531</text><text x="550.35 558.25 566.15 574.05 581.95 589.85 597.75" y="237.90" text-anchor="middle" font-size="14.6" fill="#c42424" font-weight="normal" >-10.477</text><text x="558.25 566.15 574.05 581.95 589.85 597.75" y="256.90" text-anchor="middle" font-size="14.6" fill="#806c7a" font-weight="normal" >59.793</text><text x="550.35 558.25 566.15 574.05 581.95 589.85 597.75" y="275.90" text-anchor="middle" font-size="14.6" fill="#9e6a48" font-weight="normal" >-78.757</text><text x="714.11 722.81 731.51 740.21 748.91 757.61 771.53 785.45 794.15 802.85 811.55 820.25" y="78.10" text-anchor="middle" font-size="14.2" fill="#5c5c5c" font-weight="normal" >424.25Δ+4.50</text><text x="861.25 869.15 877.05 884.95 892.85 900.75" y="104.90" text-anchor="middle" font-size="14.6" fill="#1c1c1c" font-weight="normal" >48.761</text><text x="861.25 869.15 877.05 884.95 892.85 900.75" y="123.90" text-anchor="middle" font-size="14.6" fill="#3b8cc7" font-weight="normal" >59.841</text><text x="861.25 869.15 877.05 884.95 892.85 900.75" y="142.90" text-anchor="middle" font-size="14.6" fill="#2a8f8f" font-weight="normal" >19.553</text><text x="853.35 861.25 869.15 877.05 884.95 892.85 900.75" y="161.90" text-anchor="middle" font-size="14.6" fill="#3b8a32" font-weight="normal" >-42.751</text><text x="861.25 869.15 877.05 884.95 892.85 900.75" y="180.90" text-anchor="middle" font-size="14.6" fill="#2ea52e" font-weight="normal" >46.029</text><text x="853.35 861.25 869.15 877.05 884.95 892.85 900.75" y="199.90" text-anchor="middle" font-size="14.6" fill="#7272cc" font-weight="normal" >-68.211</text><text x="861.25 869.15 877.05 884.95 892.85 900.75" y="218.90" text-anchor="middle" font-size="14.6" fill="#7e2420" font-weight="normal" >62.751</text><text x="861.25 869.15 877.05 884.95 892.85 900.75" y="237.90" text-anchor="middle" font-size="14.6" fill="#c42424" font-weight="normal" >-1.808</text><text x="861.25 869.15 877.05 884.95 892.85 900.75" y="256.90" text-anchor="middle" font-size="14.6" fill="#806c7a" font-weight="normal" >-5.420</text><text x="861.25 869.15 877.05 884.95 892.85 900.75" y="275.90" text-anchor="middle" font-size="14.6" fill="#9e6a48" font-weight="normal" >-7.096</text><text x="1060.11 1068.81 1077.51 1086.21 1094.91 1103.61 1117.53 1131.45 1140.15 1148.85 1157.55 1166.25" y="79.10" text-anchor="middle" font-size="14.2" fill="#5c5c5c" font-weight="normal" >424.25Δ+4.50</text><text x="1208.25 1216.15 1224.05 1231.95 1239.85 1247.75" y="105.90" text-anchor="middle" font-size="14.6" fill="#1c1c1c" font-weight="normal" >17.404</text><text x="1208.25 1216.15 1224.05 1231.95 1239.85 1247.75" y="124.90" text-anchor="middle" font-size="14.6" fill="#3b8cc7" font-weight="normal" >45.824</text><text x="1200.35 1208.25 1216.15 1224.05 1231.95 1239.85 1247.75" y="143.90" text-anchor="middle" font-size="14.6" fill="#2a8f8f" font-weight="normal" >-15.392</text><text x="1200.35 1208.25 1216.15 1224.05 1231.95 1239.85 1247.75" y="162.90" text-anchor="middle" font-size="14.6" fill="#3b8a32" font-weight="normal" >-26.554</text><text x="1208.25 1216.15 1224.05 1231.95 1239.85 1247.75" y="181.90" text-anchor="middle" font-size="14.6" fill="#2ea52e" font-weight="normal" >41.274</text><text x="1200.35 1208.25 1216.15 1224.05 1231.95 1239.85 1247.75" y="200.90" text-anchor="middle" font-size="14.6" fill="#7272cc" font-weight="normal" >-52.213</text><text x="1208.25 1216.15 1224.05 1231.95 1239.85 1247.75" y="219.90" text-anchor="middle" font-size="14.6" fill="#7e2420" font-weight="normal" >34.127</text><text x="1208.25 1216.15 1224.05 1231.95 1239.85 1247.75" y="238.90" text-anchor="middle" font-size="14.6" fill="#c42424" font-weight="normal" >21.223</text><text x="1208.25 1216.15 1224.05 1231.95 1239.85 1247.75" y="257.90" text-anchor="middle" font-size="14.6" fill="#806c7a" font-weight="normal" >-9.787</text><text x="1216.15 1224.05 1231.95 1239.85 1247.75" y="276.90" text-anchor="middle" font-size="14.6" fill="#9e6a48" font-weight="normal" >5.213</text></svg>
</body></html>
